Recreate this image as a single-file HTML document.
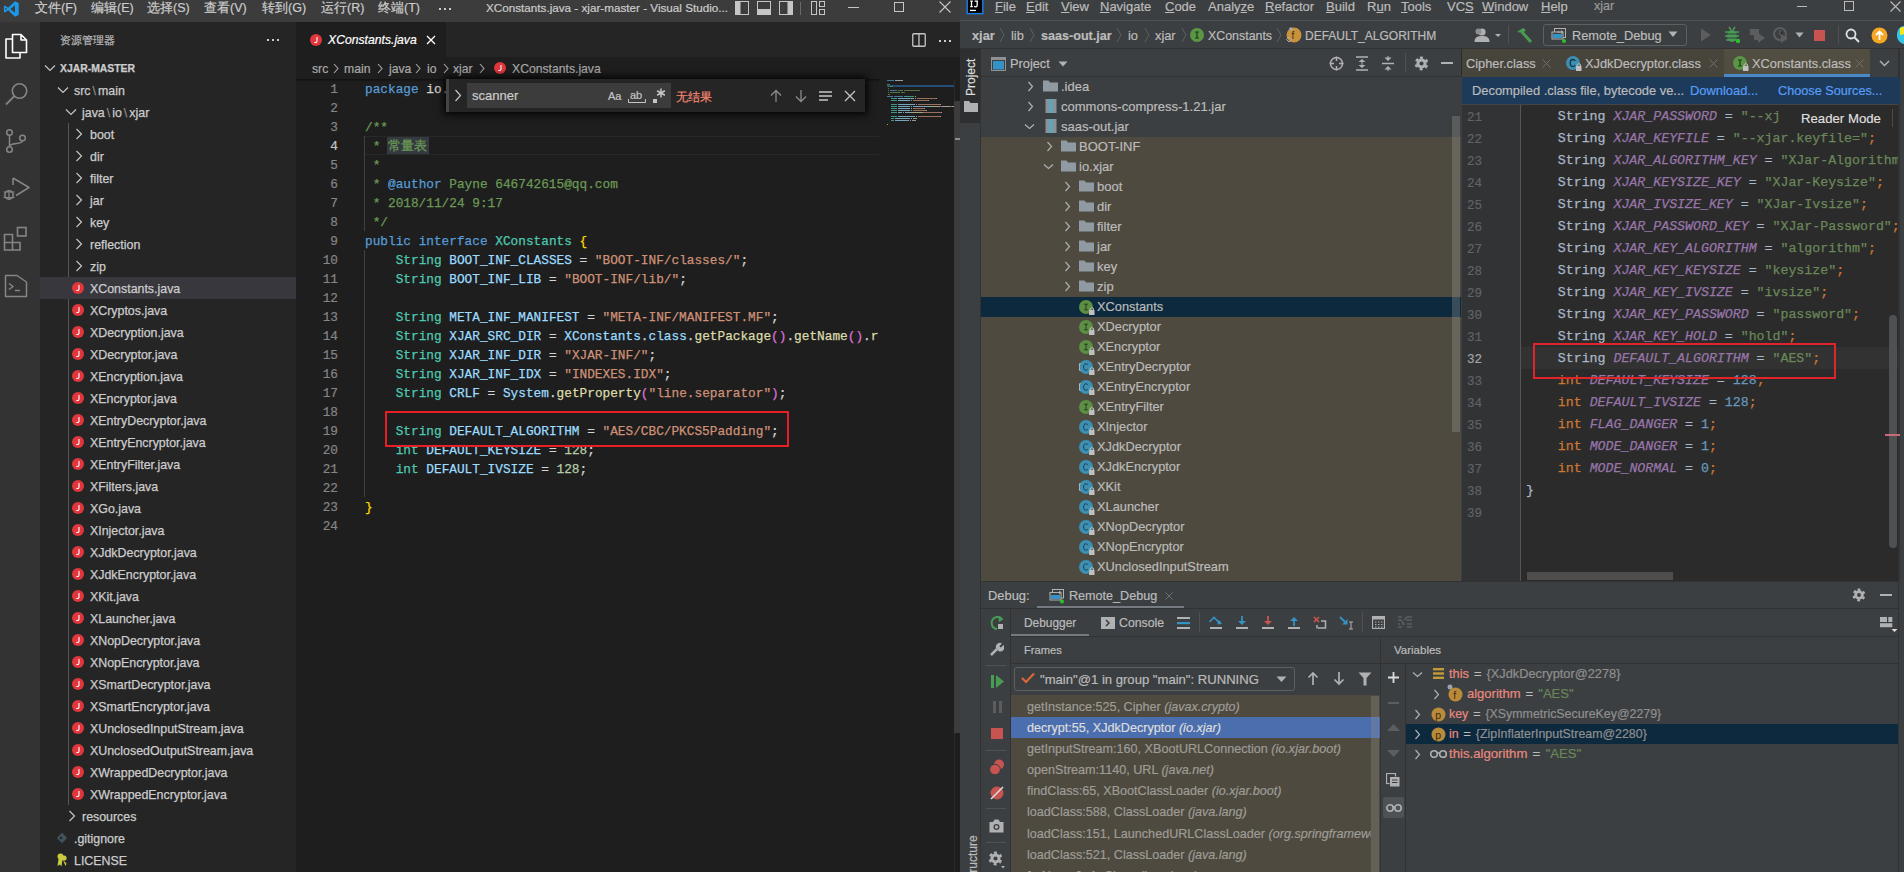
<!DOCTYPE html>
<html><head><meta charset="utf-8">
<style>
*{margin:0;padding:0;box-sizing:border-box}
html,body{width:1904px;height:872px;overflow:hidden;background:#2b2b2b;font-family:"Liberation Sans",sans-serif}
.a{position:absolute;white-space:pre}
#vs{position:absolute;left:0;top:0;width:960px;height:872px;background:#1e1e1e;overflow:hidden;color:#cccccc}
#ij{position:absolute;left:960px;top:0;width:944px;height:872px;background:#3c3f41;overflow:hidden;color:#bbbbbb}
.code{position:absolute;left:365px;top:80px;width:514px;font-family:"Liberation Mono",monospace;font-size:12.78px;line-height:19px;color:#d4d4d4;white-space:pre;overflow:hidden}
.code div{height:19px}
.ln{position:absolute;left:296px;top:80px;width:42px;text-align:right;font-family:"Liberation Mono",monospace;font-size:12.78px;line-height:19px;color:#858585;white-space:pre}
.ln div{height:19px}
.kw{color:#569cd6}.ty{color:#4ec9b0}.vr{color:#9cdcfe}.st{color:#ce9178}.nu{color:#b5cea8}.fn{color:#dcdcaa}.cm{color:#6a9955}.b1{color:#ffd700}.b2{color:#da70d6}.pn{color:#d4d4d4}
.tr{position:absolute;font-size:12.4px;color:#cccccc;height:22px;line-height:22px;white-space:pre}
.ijm{position:absolute;font-size:12.6px;color:#bbbbbb;white-space:pre}
.icode{position:absolute;font-family:"Liberation Mono",monospace;font-size:13.25px;line-height:22px;color:#a9b7c6;white-space:pre}
.icode div{height:22px}
.ik{color:#cc7832}.ip{color:#9876aa;font-style:italic}.is{color:#6a8759}.in{color:#6897bb}
u{text-decoration:underline;text-underline-offset:1px}
#vs,#ij{-webkit-text-stroke:0.2px currentColor}
.code,.icode,.tr{-webkit-text-stroke:0.25px currentColor}
</style></head><body>
<div id="vs">
<div class="a" style="left:0;top:0;width:960px;height:22px;background:#3c3c3c"></div>
<div class="a" style="left:0;top:22px;width:40px;height:850px;background:#333333"></div>
<div class="a" style="left:40px;top:22px;width:256px;height:850px;background:#252526"></div>
<div class="a" style="left:296px;top:22px;width:664px;height:35px;background:#252526"></div>
<div class="a" style="left:296px;top:22px;width:150px;height:35px;background:#1e1e1e"></div>
<div class="a" style="left:35px;top:0;height:16px;line-height:16px;font-size:12.5px;color:#cccccc">文件(F)</div>
<div class="a" style="left:91px;top:0;height:16px;line-height:16px;font-size:12.5px;color:#cccccc">编辑(E)</div>
<div class="a" style="left:147px;top:0;height:16px;line-height:16px;font-size:12.5px;color:#cccccc">选择(S)</div>
<div class="a" style="left:204px;top:0;height:16px;line-height:16px;font-size:12.5px;color:#cccccc">查看(V)</div>
<div class="a" style="left:262px;top:0;height:16px;line-height:16px;font-size:12.5px;color:#cccccc">转到(G)</div>
<div class="a" style="left:321px;top:0;height:16px;line-height:16px;font-size:12.5px;color:#cccccc">运行(R)</div>
<div class="a" style="left:378px;top:0;height:16px;line-height:16px;font-size:12.5px;color:#cccccc">终端(T)</div>
<div class="a" style="left:439px;top:8px;width:2px;height:2px;background:#cccccc;box-shadow:5px 0 #cccccc,10px 0 #cccccc"></div>
<div class="a" style="left:486px;top:0;line-height:16px;font-size:11.7px;color:#cccccc">XConstants.java - xjar-master - Visual Studio...</div>
<svg class="a" style="left:3px;top:1px" width="17" height="16" viewBox="0 0 16 16"><path d="M11.5 0.3 L15.2 2 V14 L11.5 15.7 L4.6 9.2 L1.7 11.4 L0.4 10.7 V5.3 L1.7 4.6 L4.6 6.8 Z M11.5 4.3 L6.9 8 L11.5 11.7 Z M1.9 6.4 V9.6 L3.5 8 Z" fill="#1c98e8"/></svg>
<svg class="a" style="left:734px;top:1px" width="95" height="14" viewBox="0 0 95 14"><rect x="1.5" y="0.5" width="13" height="13" fill="none" stroke="#c5c5c5"/><rect x="1.5" y="0.5" width="5" height="13" fill="#c5c5c5"/><rect x="23.5" y="0.5" width="13" height="13" fill="none" stroke="#c5c5c5"/><rect x="23.5" y="8" width="13" height="5.5" fill="#c5c5c5"/><rect x="45.5" y="0.5" width="13" height="13" fill="none" stroke="#c5c5c5"/><rect x="53.5" y="0.5" width="5" height="13" fill="#c5c5c5"/><line x1="66.5" y1="1" x2="66.5" y2="14" stroke="#6a6a6a"/><rect x="77.5" y="0.5" width="5" height="13" fill="none" stroke="#c5c5c5"/><rect x="85.5" y="0.5" width="5" height="5" fill="none" stroke="#c5c5c5"/><rect x="85.5" y="8.5" width="5" height="5" fill="none" stroke="#c5c5c5"/></svg>
<div class="a" style="left:848px;top:7px;width:11px;height:1px;background:#c5c5c5"></div>
<div class="a" style="left:894px;top:2px;width:10px;height:10px;border:1px solid #c5c5c5"></div>
<svg class="a" style="left:939px;top:1px" width="12" height="12" viewBox="0 0 12 12"><path d="M0.5 0.5 L11.5 11.5 M11.5 0.5 L0.5 11.5" stroke="#c5c5c5" stroke-width="1.1"/></svg>
<svg class="a" style="left:4px;top:33px" width="24" height="26" viewBox="0 0 24 26"><path d="M8.5 1.5 H17 L22.5 7 V19.5 H8.5 Z M17 1.5 V7 H22.5" fill="none" stroke="#ffffff" stroke-width="1.6" stroke-linejoin="round"/><path d="M8.5 6 H2 V25 H16 V19.5" fill="none" stroke="#ffffff" stroke-width="1.6" stroke-linejoin="round"/></svg>
<svg class="a" style="left:4px;top:81px" width="26" height="26" viewBox="0 0 26 26"><circle cx="15.5" cy="10" r="7.2" fill="none" stroke="#858585" stroke-width="1.6"/><path d="M10.3 15.2 L2 23.5" stroke="#858585" stroke-width="1.8"/></svg>
<svg class="a" style="left:4px;top:128px" width="24" height="26" viewBox="0 0 24 26"><circle cx="5.5" cy="4.5" r="2.8" fill="none" stroke="#858585" stroke-width="1.5"/><circle cx="5.5" cy="21.5" r="2.8" fill="none" stroke="#858585" stroke-width="1.5"/><circle cx="18.5" cy="10" r="2.8" fill="none" stroke="#858585" stroke-width="1.5"/><path d="M5.5 7.3 V18.7 M18.5 12.8 C18.5 17 5.5 14 5.5 18.7" fill="none" stroke="#858585" stroke-width="1.5"/></svg>
<svg class="a" style="left:2px;top:176px" width="28" height="26" viewBox="0 0 28 26"><path d="M11 2 L27 11.5 L14 19.5" fill="none" stroke="#858585" stroke-width="1.6" stroke-linejoin="round"/><path d="M11 2 V9" stroke="#858585" stroke-width="1.6"/><circle cx="7" cy="19" r="4.2" fill="none" stroke="#858585" stroke-width="1.6"/><path d="M1.5 16 H12.5 M1.5 21.5 H12.5 M7 14 V24" stroke="#858585" stroke-width="1.2"/></svg>
<svg class="a" style="left:3px;top:225px" width="26" height="26" viewBox="0 0 26 26"><path d="M1.5 9.5 H9.5 V17.5 H1.5 Z M1.5 17.5 V25 H9.5 V17.5 H17 V25 H9.5" fill="none" stroke="#858585" stroke-width="1.6"/><rect x="14.5" y="2.5" width="8.5" height="8.5" fill="none" stroke="#858585" stroke-width="1.6"/></svg>
<svg class="a" style="left:4px;top:274px" width="24" height="24" viewBox="0 0 24 24"><path d="M1.5 1.5 H13 L22.5 8 V22.5 H1.5 Z" fill="none" stroke="#858585" stroke-width="1.5" stroke-linejoin="round"/><path d="M5 9.5 L9 12.5 L5 15.5 M11 16.5 H16" fill="none" stroke="#858585" stroke-width="1.4"/></svg>
<div class="a" style="left:60px;top:32px;line-height:16px;font-size:10.5px;color:#bbbbbb">资源管理器</div>
<div class="a" style="left:267px;top:39px;width:2px;height:2px;background:#cccccc;box-shadow:5px 0 #cccccc,10px 0 #cccccc"></div>
<svg class="a" style="left:44px;top:64px" width="12" height="8" viewBox="0 0 12 8"><path d="M1 1.5 L6 6.5 L11 1.5" fill="none" stroke="#c5c5c5" stroke-width="1.2"/></svg>
<div class="tr" style="left:60px;top:58px;font-weight:bold;font-size:10.4px;color:#cccccc">XJAR-MASTER</div>
<svg class="a" style="left:57px;top:86px" width="12" height="8" viewBox="0 0 12 8"><path d="M1 1.5 L6 6.5 L11 1.5" fill="none" stroke="#c5c5c5" stroke-width="1.2"/></svg>
<div class="tr" style="left:74px;top:80px;">src<span style="color:#8b8b8b;margin:0 2px">\</span>main</div>
<svg class="a" style="left:65px;top:108px" width="12" height="8" viewBox="0 0 12 8"><path d="M1 1.5 L6 6.5 L11 1.5" fill="none" stroke="#c5c5c5" stroke-width="1.2"/></svg>
<div class="tr" style="left:82px;top:102px;">java<span style="color:#8b8b8b;margin:0 2px">\</span>io<span style="color:#8b8b8b;margin:0 2px">\</span>xjar</div>
<div class="a" style="left:68px;top:123px;width:1px;height:682px;background:#585858"></div>
<svg class="a" style="left:75px;top:128px" width="8" height="12" viewBox="0 0 8 12"><path d="M1.5 1 L6.5 6 L1.5 11" fill="none" stroke="#c5c5c5" stroke-width="1.2"/></svg>
<div class="tr" style="left:90px;top:124px;">boot</div>
<svg class="a" style="left:75px;top:150px" width="8" height="12" viewBox="0 0 8 12"><path d="M1.5 1 L6.5 6 L1.5 11" fill="none" stroke="#c5c5c5" stroke-width="1.2"/></svg>
<div class="tr" style="left:90px;top:146px;">dir</div>
<svg class="a" style="left:75px;top:172px" width="8" height="12" viewBox="0 0 8 12"><path d="M1.5 1 L6.5 6 L1.5 11" fill="none" stroke="#c5c5c5" stroke-width="1.2"/></svg>
<div class="tr" style="left:90px;top:168px;">filter</div>
<svg class="a" style="left:75px;top:194px" width="8" height="12" viewBox="0 0 8 12"><path d="M1.5 1 L6.5 6 L1.5 11" fill="none" stroke="#c5c5c5" stroke-width="1.2"/></svg>
<div class="tr" style="left:90px;top:190px;">jar</div>
<svg class="a" style="left:75px;top:216px" width="8" height="12" viewBox="0 0 8 12"><path d="M1.5 1 L6.5 6 L1.5 11" fill="none" stroke="#c5c5c5" stroke-width="1.2"/></svg>
<div class="tr" style="left:90px;top:212px;">key</div>
<svg class="a" style="left:75px;top:238px" width="8" height="12" viewBox="0 0 8 12"><path d="M1.5 1 L6.5 6 L1.5 11" fill="none" stroke="#c5c5c5" stroke-width="1.2"/></svg>
<div class="tr" style="left:90px;top:234px;">reflection</div>
<svg class="a" style="left:75px;top:260px" width="8" height="12" viewBox="0 0 8 12"><path d="M1.5 1 L6.5 6 L1.5 11" fill="none" stroke="#c5c5c5" stroke-width="1.2"/></svg>
<div class="tr" style="left:90px;top:256px;">zip</div>
<div class="a" style="left:40px;top:277px;width:256px;height:22px;background:#37373d"></div>
<svg class="a" style="left:72px;top:282px" width="12" height="12" viewBox="0 0 12 12"><circle cx="6" cy="6" r="6" fill="#e1373c"/><path d="M7 3 V7 C7 8.6 5.4 8.8 4.3 8.2" fill="none" stroke="#fff" stroke-width="1.1"/></svg>
<div class="tr" style="left:90px;top:278px;">XConstants.java</div>
<svg class="a" style="left:72px;top:304px" width="12" height="12" viewBox="0 0 12 12"><circle cx="6" cy="6" r="6" fill="#e1373c"/><path d="M7 3 V7 C7 8.6 5.4 8.8 4.3 8.2" fill="none" stroke="#fff" stroke-width="1.1"/></svg>
<div class="tr" style="left:90px;top:300px;">XCryptos.java</div>
<svg class="a" style="left:72px;top:326px" width="12" height="12" viewBox="0 0 12 12"><circle cx="6" cy="6" r="6" fill="#e1373c"/><path d="M7 3 V7 C7 8.6 5.4 8.8 4.3 8.2" fill="none" stroke="#fff" stroke-width="1.1"/></svg>
<div class="tr" style="left:90px;top:322px;">XDecryption.java</div>
<svg class="a" style="left:72px;top:348px" width="12" height="12" viewBox="0 0 12 12"><circle cx="6" cy="6" r="6" fill="#e1373c"/><path d="M7 3 V7 C7 8.6 5.4 8.8 4.3 8.2" fill="none" stroke="#fff" stroke-width="1.1"/></svg>
<div class="tr" style="left:90px;top:344px;">XDecryptor.java</div>
<svg class="a" style="left:72px;top:370px" width="12" height="12" viewBox="0 0 12 12"><circle cx="6" cy="6" r="6" fill="#e1373c"/><path d="M7 3 V7 C7 8.6 5.4 8.8 4.3 8.2" fill="none" stroke="#fff" stroke-width="1.1"/></svg>
<div class="tr" style="left:90px;top:366px;">XEncryption.java</div>
<svg class="a" style="left:72px;top:392px" width="12" height="12" viewBox="0 0 12 12"><circle cx="6" cy="6" r="6" fill="#e1373c"/><path d="M7 3 V7 C7 8.6 5.4 8.8 4.3 8.2" fill="none" stroke="#fff" stroke-width="1.1"/></svg>
<div class="tr" style="left:90px;top:388px;">XEncryptor.java</div>
<svg class="a" style="left:72px;top:414px" width="12" height="12" viewBox="0 0 12 12"><circle cx="6" cy="6" r="6" fill="#e1373c"/><path d="M7 3 V7 C7 8.6 5.4 8.8 4.3 8.2" fill="none" stroke="#fff" stroke-width="1.1"/></svg>
<div class="tr" style="left:90px;top:410px;">XEntryDecryptor.java</div>
<svg class="a" style="left:72px;top:436px" width="12" height="12" viewBox="0 0 12 12"><circle cx="6" cy="6" r="6" fill="#e1373c"/><path d="M7 3 V7 C7 8.6 5.4 8.8 4.3 8.2" fill="none" stroke="#fff" stroke-width="1.1"/></svg>
<div class="tr" style="left:90px;top:432px;">XEntryEncryptor.java</div>
<svg class="a" style="left:72px;top:458px" width="12" height="12" viewBox="0 0 12 12"><circle cx="6" cy="6" r="6" fill="#e1373c"/><path d="M7 3 V7 C7 8.6 5.4 8.8 4.3 8.2" fill="none" stroke="#fff" stroke-width="1.1"/></svg>
<div class="tr" style="left:90px;top:454px;">XEntryFilter.java</div>
<svg class="a" style="left:72px;top:480px" width="12" height="12" viewBox="0 0 12 12"><circle cx="6" cy="6" r="6" fill="#e1373c"/><path d="M7 3 V7 C7 8.6 5.4 8.8 4.3 8.2" fill="none" stroke="#fff" stroke-width="1.1"/></svg>
<div class="tr" style="left:90px;top:476px;">XFilters.java</div>
<svg class="a" style="left:72px;top:502px" width="12" height="12" viewBox="0 0 12 12"><circle cx="6" cy="6" r="6" fill="#e1373c"/><path d="M7 3 V7 C7 8.6 5.4 8.8 4.3 8.2" fill="none" stroke="#fff" stroke-width="1.1"/></svg>
<div class="tr" style="left:90px;top:498px;">XGo.java</div>
<svg class="a" style="left:72px;top:524px" width="12" height="12" viewBox="0 0 12 12"><circle cx="6" cy="6" r="6" fill="#e1373c"/><path d="M7 3 V7 C7 8.6 5.4 8.8 4.3 8.2" fill="none" stroke="#fff" stroke-width="1.1"/></svg>
<div class="tr" style="left:90px;top:520px;">XInjector.java</div>
<svg class="a" style="left:72px;top:546px" width="12" height="12" viewBox="0 0 12 12"><circle cx="6" cy="6" r="6" fill="#e1373c"/><path d="M7 3 V7 C7 8.6 5.4 8.8 4.3 8.2" fill="none" stroke="#fff" stroke-width="1.1"/></svg>
<div class="tr" style="left:90px;top:542px;">XJdkDecryptor.java</div>
<svg class="a" style="left:72px;top:568px" width="12" height="12" viewBox="0 0 12 12"><circle cx="6" cy="6" r="6" fill="#e1373c"/><path d="M7 3 V7 C7 8.6 5.4 8.8 4.3 8.2" fill="none" stroke="#fff" stroke-width="1.1"/></svg>
<div class="tr" style="left:90px;top:564px;">XJdkEncryptor.java</div>
<svg class="a" style="left:72px;top:590px" width="12" height="12" viewBox="0 0 12 12"><circle cx="6" cy="6" r="6" fill="#e1373c"/><path d="M7 3 V7 C7 8.6 5.4 8.8 4.3 8.2" fill="none" stroke="#fff" stroke-width="1.1"/></svg>
<div class="tr" style="left:90px;top:586px;">XKit.java</div>
<svg class="a" style="left:72px;top:612px" width="12" height="12" viewBox="0 0 12 12"><circle cx="6" cy="6" r="6" fill="#e1373c"/><path d="M7 3 V7 C7 8.6 5.4 8.8 4.3 8.2" fill="none" stroke="#fff" stroke-width="1.1"/></svg>
<div class="tr" style="left:90px;top:608px;">XLauncher.java</div>
<svg class="a" style="left:72px;top:634px" width="12" height="12" viewBox="0 0 12 12"><circle cx="6" cy="6" r="6" fill="#e1373c"/><path d="M7 3 V7 C7 8.6 5.4 8.8 4.3 8.2" fill="none" stroke="#fff" stroke-width="1.1"/></svg>
<div class="tr" style="left:90px;top:630px;">XNopDecryptor.java</div>
<svg class="a" style="left:72px;top:656px" width="12" height="12" viewBox="0 0 12 12"><circle cx="6" cy="6" r="6" fill="#e1373c"/><path d="M7 3 V7 C7 8.6 5.4 8.8 4.3 8.2" fill="none" stroke="#fff" stroke-width="1.1"/></svg>
<div class="tr" style="left:90px;top:652px;">XNopEncryptor.java</div>
<svg class="a" style="left:72px;top:678px" width="12" height="12" viewBox="0 0 12 12"><circle cx="6" cy="6" r="6" fill="#e1373c"/><path d="M7 3 V7 C7 8.6 5.4 8.8 4.3 8.2" fill="none" stroke="#fff" stroke-width="1.1"/></svg>
<div class="tr" style="left:90px;top:674px;">XSmartDecryptor.java</div>
<svg class="a" style="left:72px;top:700px" width="12" height="12" viewBox="0 0 12 12"><circle cx="6" cy="6" r="6" fill="#e1373c"/><path d="M7 3 V7 C7 8.6 5.4 8.8 4.3 8.2" fill="none" stroke="#fff" stroke-width="1.1"/></svg>
<div class="tr" style="left:90px;top:696px;">XSmartEncryptor.java</div>
<svg class="a" style="left:72px;top:722px" width="12" height="12" viewBox="0 0 12 12"><circle cx="6" cy="6" r="6" fill="#e1373c"/><path d="M7 3 V7 C7 8.6 5.4 8.8 4.3 8.2" fill="none" stroke="#fff" stroke-width="1.1"/></svg>
<div class="tr" style="left:90px;top:718px;">XUnclosedInputStream.java</div>
<svg class="a" style="left:72px;top:744px" width="12" height="12" viewBox="0 0 12 12"><circle cx="6" cy="6" r="6" fill="#e1373c"/><path d="M7 3 V7 C7 8.6 5.4 8.8 4.3 8.2" fill="none" stroke="#fff" stroke-width="1.1"/></svg>
<div class="tr" style="left:90px;top:740px;">XUnclosedOutputStream.java</div>
<svg class="a" style="left:72px;top:766px" width="12" height="12" viewBox="0 0 12 12"><circle cx="6" cy="6" r="6" fill="#e1373c"/><path d="M7 3 V7 C7 8.6 5.4 8.8 4.3 8.2" fill="none" stroke="#fff" stroke-width="1.1"/></svg>
<div class="tr" style="left:90px;top:762px;">XWrappedDecryptor.java</div>
<svg class="a" style="left:72px;top:788px" width="12" height="12" viewBox="0 0 12 12"><circle cx="6" cy="6" r="6" fill="#e1373c"/><path d="M7 3 V7 C7 8.6 5.4 8.8 4.3 8.2" fill="none" stroke="#fff" stroke-width="1.1"/></svg>
<div class="tr" style="left:90px;top:784px;">XWrappedEncryptor.java</div>
<svg class="a" style="left:68px;top:810px" width="8" height="12" viewBox="0 0 8 12"><path d="M1.5 1 L6.5 6 L1.5 11" fill="none" stroke="#c5c5c5" stroke-width="1.2"/></svg>
<div class="tr" style="left:82px;top:806px;">resources</div>
<svg class="a" style="left:56px;top:832px" width="12" height="12" viewBox="0 0 12 12"><path d="M6 0.8 L11.2 6 L6 11.2 L0.8 6 Z" fill="#41535b"/><circle cx="5" cy="6" r="1.3" fill="#252526"/></svg>
<div class="tr" style="left:74px;top:828px;">.gitignore</div>
<svg class="a" style="left:57px;top:853px" width="10" height="14" viewBox="0 0 10 14"><circle cx="3.5" cy="3.5" r="3" fill="#cbcb41"/><circle cx="7" cy="5" r="2.6" fill="#cbcb41"/><path d="M1.5 6 L0.5 13 L3 11.5 L4.5 13.5 L5.5 6 Z M6 7 L8.5 13 L9.5 10.5" fill="#cbcb41"/></svg>
<div class="tr" style="left:74px;top:850px;">LICENSE</div>
<svg class="a" style="left:310px;top:34px" width="12" height="12" viewBox="0 0 12 12"><circle cx="6" cy="6" r="6" fill="#e1373c"/><path d="M7 3 V7 C7 8.6 5.4 8.8 4.3 8.2" fill="none" stroke="#fff" stroke-width="1.1"/></svg>
<div class="a" style="left:328px;top:32px;line-height:16px;font-size:12.2px;font-style:italic;color:#ffffff">XConstants.java</div>
<svg class="a" style="left:426px;top:35px" width="10" height="10" viewBox="0 0 10 10"><path d="M1 1 L9 9 M9 1 L1 9" stroke="#ffffff" stroke-width="1.3"/></svg>
<svg class="a" style="left:912px;top:33px" width="14" height="14" viewBox="0 0 14 14"><rect x="0.75" y="0.75" width="12.5" height="12.5" rx="1" fill="none" stroke="#c5c5c5" stroke-width="1.3"/><line x1="7" y1="1" x2="7" y2="13" stroke="#c5c5c5" stroke-width="1.3"/></svg>
<div class="a" style="left:939px;top:40px;width:2px;height:2px;background:#cccccc;box-shadow:5px 0 #cccccc,10px 0 #cccccc"></div>
<div class="a" style="left:312px;top:61px;line-height:16px;font-size:12.2px;color:#a9a9a9">src</div>
<div class="a" style="left:344px;top:61px;line-height:16px;font-size:12.2px;color:#a9a9a9">main</div>
<div class="a" style="left:389px;top:61px;line-height:16px;font-size:12.2px;color:#a9a9a9">java</div>
<div class="a" style="left:427px;top:61px;line-height:16px;font-size:12.2px;color:#a9a9a9">io</div>
<div class="a" style="left:453px;top:61px;line-height:16px;font-size:12.2px;color:#a9a9a9">xjar</div>
<svg class="a" style="left:333px;top:63px" width="6" height="11" viewBox="0 0 6 11"><path d="M1 1 L5 5.5 L1 10" fill="none" stroke="#a9a9a9" stroke-width="1.1"/></svg>
<svg class="a" style="left:377px;top:63px" width="6" height="11" viewBox="0 0 6 11"><path d="M1 1 L5 5.5 L1 10" fill="none" stroke="#a9a9a9" stroke-width="1.1"/></svg>
<svg class="a" style="left:415px;top:63px" width="6" height="11" viewBox="0 0 6 11"><path d="M1 1 L5 5.5 L1 10" fill="none" stroke="#a9a9a9" stroke-width="1.1"/></svg>
<svg class="a" style="left:443px;top:63px" width="6" height="11" viewBox="0 0 6 11"><path d="M1 1 L5 5.5 L1 10" fill="none" stroke="#a9a9a9" stroke-width="1.1"/></svg>
<svg class="a" style="left:479px;top:63px" width="6" height="11" viewBox="0 0 6 11"><path d="M1 1 L5 5.5 L1 10" fill="none" stroke="#a9a9a9" stroke-width="1.1"/></svg>
<svg class="a" style="left:494px;top:62px" width="12" height="12" viewBox="0 0 12 12"><circle cx="6" cy="6" r="6" fill="#e1373c"/><path d="M7 3 V7 C7 8.6 5.4 8.8 4.3 8.2" fill="none" stroke="#fff" stroke-width="1.1"/></svg>
<div class="a" style="left:512px;top:61px;line-height:16px;font-size:12.2px;color:#a9a9a9">XConstants.java</div>
<div class="a" style="left:296px;top:79px;width:583px;height:3px;background:linear-gradient(#111111,rgba(30,30,30,0))"></div>
<div class="a" style="left:365px;top:136px;width:514px;height:19px;border-top:1px solid #282828;border-bottom:1px solid #282828"></div>
<div class="a" style="left:387px;top:137px;width:42px;height:17px;background:#343a40"></div>
<div class="a" style="left:364px;top:136px;width:1px;height:95px;background:#404040"></div>
<div class="a" style="left:364px;top:250px;width:1px;height:247px;background:#404040"></div>
<div class="ln"><div style="">1</div><div style="">2</div><div style="">3</div><div style="color:#c6c6c6">4</div><div style="">5</div><div style="">6</div><div style="">7</div><div style="">8</div><div style="">9</div><div style="">10</div><div style="">11</div><div style="">12</div><div style="">13</div><div style="">14</div><div style="">15</div><div style="">16</div><div style="">17</div><div style="">18</div><div style="">19</div><div style="">20</div><div style="">21</div><div style="">22</div><div style="">23</div><div style="">24</div></div>
<div class="code"><div><span class="kw">package</span> io.xjar;</div><div></div><div><span class="cm">/**</span></div><div><span class="cm"> * 常量表</span></div><div><span class="cm"> *</span></div><div><span class="cm"> * </span><span class="kw">@author</span><span class="cm"> Payne 646742615@qq.com</span></div><div><span class="cm"> * 2018/11/24 9:17</span></div><div><span class="cm"> */</span></div><div><span class="kw">public</span> <span class="kw">interface</span> <span class="ty">XConstants</span> <span class="b1">{</span></div><div>    <span class="ty">String</span> <span class="vr">BOOT_INF_CLASSES</span> = <span class="st">&quot;BOOT-INF/classes/&quot;</span>;</div><div>    <span class="ty">String</span> <span class="vr">BOOT_INF_LIB</span> = <span class="st">&quot;BOOT-INF/lib/&quot;</span>;</div><div></div><div>    <span class="ty">String</span> <span class="vr">META_INF_MANIFEST</span> = <span class="st">&quot;META-INF/MANIFEST.MF&quot;</span>;</div><div>    <span class="ty">String</span> <span class="vr">XJAR_SRC_DIR</span> = <span class="vr">XConstants</span>.<span class="vr">class</span>.<span class="fn">getPackage</span><span class="b2">()</span>.<span class="fn">getName</span><span class="b2">()</span>.<span class="fn">replace</span><span class="b2">(</span><span class="st">&#x27;.&#x27;</span>, <span class="st">&#x27;/&#x27;</span><span class="b2">)</span> + <span class="st">&quot;/&quot;</span>;</div><div>    <span class="ty">String</span> <span class="vr">XJAR_INF_DIR</span> = <span class="st">&quot;XJAR-INF/&quot;</span>;</div><div>    <span class="ty">String</span> <span class="vr">XJAR_INF_IDX</span> = <span class="st">&quot;INDEXES.IDX&quot;</span>;</div><div>    <span class="ty">String</span> <span class="vr">CRLF</span> = <span class="vr">System</span>.<span class="fn">getProperty</span><span class="b2">(</span><span class="st">&quot;line.separator&quot;</span><span class="b2">)</span>;</div><div></div><div>    <span class="ty">String</span> <span class="vr">DEFAULT_ALGORITHM</span> = <span class="st">&quot;AES/CBC/PKCS5Padding&quot;</span>;</div><div>    <span class="ty">int</span> <span class="vr">DEFAULT_KEYSIZE</span> = <span class="nu">128</span>;</div><div>    <span class="ty">int</span> <span class="vr">DEFAULT_IVSIZE</span> = <span class="nu">128</span>;</div><div></div><div><span class="b1">}</span></div><div></div></div>
<div class="a" style="left:385px;top:411px;width:404px;height:36px;border:2px solid #e81f25"></div>
<div class="a" style="left:879px;top:79px;width:81px;height:793px;background:#1e1e1e"></div>
<div class="a" style="left:887px;top:85px;width:67px;height:2px;background:#264f78"></div>
<div class="a" style="left:954px;top:79px;width:6px;height:793px;background:#1e1e1e;border-left:1px solid #2a2a2a"></div>
<div class="a" style="left:954px;top:101px;width:6px;height:632px;background:#3c3c3c"></div>
<div class="a" style="left:955px;top:138px;width:5px;height:2px;background:#8a8a8a"></div>
<div class="a" style="left:887px;top:80px;width:67px;height:60px;overflow:hidden"><div class="a" style="left:0px;top:0px;width:7px;height:1px;background:#569cd6;opacity:0.7"></div><div class="a" style="left:8px;top:0px;width:8px;height:1px;background:#d4d4d4;opacity:0.7"></div><div class="a" style="left:0px;top:4px;width:3px;height:1px;background:#6a9955;opacity:0.7"></div><div class="a" style="left:1px;top:6px;width:1px;height:1px;background:#6a9955;opacity:0.7"></div><div class="a" style="left:3px;top:6px;width:3px;height:1px;background:#6a9955;opacity:0.7"></div><div class="a" style="left:1px;top:8px;width:1px;height:1px;background:#6a9955;opacity:0.7"></div><div class="a" style="left:1px;top:10px;width:1px;height:1px;background:#6a9955;opacity:0.7"></div><div class="a" style="left:3px;top:10px;width:7px;height:1px;background:#569cd6;opacity:0.7"></div><div class="a" style="left:11px;top:10px;width:5px;height:1px;background:#6a9955;opacity:0.7"></div><div class="a" style="left:17px;top:10px;width:16px;height:1px;background:#6a9955;opacity:0.7"></div><div class="a" style="left:1px;top:12px;width:1px;height:1px;background:#6a9955;opacity:0.7"></div><div class="a" style="left:3px;top:12px;width:10px;height:1px;background:#6a9955;opacity:0.7"></div><div class="a" style="left:14px;top:12px;width:4px;height:1px;background:#6a9955;opacity:0.7"></div><div class="a" style="left:1px;top:14px;width:2px;height:1px;background:#6a9955;opacity:0.7"></div><div class="a" style="left:0px;top:16px;width:6px;height:1px;background:#569cd6;opacity:0.7"></div><div class="a" style="left:7px;top:16px;width:9px;height:1px;background:#569cd6;opacity:0.7"></div><div class="a" style="left:17px;top:16px;width:10px;height:1px;background:#4ec9b0;opacity:0.7"></div><div class="a" style="left:28px;top:16px;width:1px;height:1px;background:#ffd700;opacity:0.7"></div><div class="a" style="left:4px;top:18px;width:6px;height:1px;background:#4ec9b0;opacity:0.7"></div><div class="a" style="left:11px;top:18px;width:16px;height:1px;background:#9cdcfe;opacity:0.7"></div><div class="a" style="left:28px;top:18px;width:1px;height:1px;background:#d4d4d4;opacity:0.7"></div><div class="a" style="left:30px;top:18px;width:19px;height:1px;background:#ce9178;opacity:0.7"></div><div class="a" style="left:49px;top:18px;width:1px;height:1px;background:#d4d4d4;opacity:0.7"></div><div class="a" style="left:4px;top:20px;width:6px;height:1px;background:#4ec9b0;opacity:0.7"></div><div class="a" style="left:11px;top:20px;width:12px;height:1px;background:#9cdcfe;opacity:0.7"></div><div class="a" style="left:24px;top:20px;width:1px;height:1px;background:#d4d4d4;opacity:0.7"></div><div class="a" style="left:26px;top:20px;width:15px;height:1px;background:#ce9178;opacity:0.7"></div><div class="a" style="left:41px;top:20px;width:1px;height:1px;background:#d4d4d4;opacity:0.7"></div><div class="a" style="left:4px;top:24px;width:6px;height:1px;background:#4ec9b0;opacity:0.7"></div><div class="a" style="left:11px;top:24px;width:17px;height:1px;background:#9cdcfe;opacity:0.7"></div><div class="a" style="left:29px;top:24px;width:1px;height:1px;background:#d4d4d4;opacity:0.7"></div><div class="a" style="left:31px;top:24px;width:22px;height:1px;background:#ce9178;opacity:0.7"></div><div class="a" style="left:53px;top:24px;width:1px;height:1px;background:#d4d4d4;opacity:0.7"></div><div class="a" style="left:4px;top:26px;width:6px;height:1px;background:#4ec9b0;opacity:0.7"></div><div class="a" style="left:11px;top:26px;width:12px;height:1px;background:#9cdcfe;opacity:0.7"></div><div class="a" style="left:24px;top:26px;width:1px;height:1px;background:#d4d4d4;opacity:0.7"></div><div class="a" style="left:26px;top:26px;width:10px;height:1px;background:#9cdcfe;opacity:0.7"></div><div class="a" style="left:36px;top:26px;width:1px;height:1px;background:#d4d4d4;opacity:0.7"></div><div class="a" style="left:37px;top:26px;width:5px;height:1px;background:#9cdcfe;opacity:0.7"></div><div class="a" style="left:42px;top:26px;width:1px;height:1px;background:#d4d4d4;opacity:0.7"></div><div class="a" style="left:43px;top:26px;width:10px;height:1px;background:#dcdcaa;opacity:0.7"></div><div class="a" style="left:53px;top:26px;width:2px;height:1px;background:#da70d6;opacity:0.7"></div><div class="a" style="left:55px;top:26px;width:1px;height:1px;background:#d4d4d4;opacity:0.7"></div><div class="a" style="left:56px;top:26px;width:7px;height:1px;background:#dcdcaa;opacity:0.7"></div><div class="a" style="left:63px;top:26px;width:2px;height:1px;background:#da70d6;opacity:0.7"></div><div class="a" style="left:65px;top:26px;width:1px;height:1px;background:#d4d4d4;opacity:0.7"></div><div class="a" style="left:66px;top:26px;width:7px;height:1px;background:#dcdcaa;opacity:0.7"></div><div class="a" style="left:73px;top:26px;width:1px;height:1px;background:#da70d6;opacity:0.7"></div><div class="a" style="left:74px;top:26px;width:3px;height:1px;background:#ce9178;opacity:0.7"></div><div class="a" style="left:77px;top:26px;width:1px;height:1px;background:#d4d4d4;opacity:0.7"></div><div class="a" style="left:79px;top:26px;width:3px;height:1px;background:#ce9178;opacity:0.7"></div><div class="a" style="left:82px;top:26px;width:1px;height:1px;background:#da70d6;opacity:0.7"></div><div class="a" style="left:84px;top:26px;width:1px;height:1px;background:#d4d4d4;opacity:0.7"></div><div class="a" style="left:86px;top:26px;width:3px;height:1px;background:#ce9178;opacity:0.7"></div><div class="a" style="left:89px;top:26px;width:1px;height:1px;background:#d4d4d4;opacity:0.7"></div><div class="a" style="left:4px;top:28px;width:6px;height:1px;background:#4ec9b0;opacity:0.7"></div><div class="a" style="left:11px;top:28px;width:12px;height:1px;background:#9cdcfe;opacity:0.7"></div><div class="a" style="left:24px;top:28px;width:1px;height:1px;background:#d4d4d4;opacity:0.7"></div><div class="a" style="left:26px;top:28px;width:11px;height:1px;background:#ce9178;opacity:0.7"></div><div class="a" style="left:37px;top:28px;width:1px;height:1px;background:#d4d4d4;opacity:0.7"></div><div class="a" style="left:4px;top:30px;width:6px;height:1px;background:#4ec9b0;opacity:0.7"></div><div class="a" style="left:11px;top:30px;width:12px;height:1px;background:#9cdcfe;opacity:0.7"></div><div class="a" style="left:24px;top:30px;width:1px;height:1px;background:#d4d4d4;opacity:0.7"></div><div class="a" style="left:26px;top:30px;width:13px;height:1px;background:#ce9178;opacity:0.7"></div><div class="a" style="left:39px;top:30px;width:1px;height:1px;background:#d4d4d4;opacity:0.7"></div><div class="a" style="left:4px;top:32px;width:6px;height:1px;background:#4ec9b0;opacity:0.7"></div><div class="a" style="left:11px;top:32px;width:4px;height:1px;background:#9cdcfe;opacity:0.7"></div><div class="a" style="left:16px;top:32px;width:1px;height:1px;background:#d4d4d4;opacity:0.7"></div><div class="a" style="left:18px;top:32px;width:6px;height:1px;background:#9cdcfe;opacity:0.7"></div><div class="a" style="left:24px;top:32px;width:1px;height:1px;background:#d4d4d4;opacity:0.7"></div><div class="a" style="left:25px;top:32px;width:11px;height:1px;background:#dcdcaa;opacity:0.7"></div><div class="a" style="left:36px;top:32px;width:1px;height:1px;background:#da70d6;opacity:0.7"></div><div class="a" style="left:37px;top:32px;width:16px;height:1px;background:#ce9178;opacity:0.7"></div><div class="a" style="left:53px;top:32px;width:1px;height:1px;background:#da70d6;opacity:0.7"></div><div class="a" style="left:54px;top:32px;width:1px;height:1px;background:#d4d4d4;opacity:0.7"></div><div class="a" style="left:4px;top:36px;width:6px;height:1px;background:#4ec9b0;opacity:0.7"></div><div class="a" style="left:11px;top:36px;width:17px;height:1px;background:#9cdcfe;opacity:0.7"></div><div class="a" style="left:29px;top:36px;width:1px;height:1px;background:#d4d4d4;opacity:0.7"></div><div class="a" style="left:31px;top:36px;width:22px;height:1px;background:#ce9178;opacity:0.7"></div><div class="a" style="left:53px;top:36px;width:1px;height:1px;background:#d4d4d4;opacity:0.7"></div><div class="a" style="left:4px;top:38px;width:3px;height:1px;background:#4ec9b0;opacity:0.7"></div><div class="a" style="left:8px;top:38px;width:15px;height:1px;background:#9cdcfe;opacity:0.7"></div><div class="a" style="left:24px;top:38px;width:1px;height:1px;background:#d4d4d4;opacity:0.7"></div><div class="a" style="left:26px;top:38px;width:3px;height:1px;background:#b5cea8;opacity:0.7"></div><div class="a" style="left:29px;top:38px;width:1px;height:1px;background:#d4d4d4;opacity:0.7"></div><div class="a" style="left:4px;top:40px;width:3px;height:1px;background:#4ec9b0;opacity:0.7"></div><div class="a" style="left:8px;top:40px;width:14px;height:1px;background:#9cdcfe;opacity:0.7"></div><div class="a" style="left:23px;top:40px;width:1px;height:1px;background:#d4d4d4;opacity:0.7"></div><div class="a" style="left:25px;top:40px;width:3px;height:1px;background:#b5cea8;opacity:0.7"></div><div class="a" style="left:28px;top:40px;width:1px;height:1px;background:#d4d4d4;opacity:0.7"></div><div class="a" style="left:0px;top:44px;width:1px;height:1px;background:#ffd700;opacity:0.7"></div></div>
<div class="a" style="left:446px;top:79px;width:419px;height:33px;background:#252526;box-shadow:0 0 8px 2px #000000"></div>
<div class="a" style="left:446px;top:79px;width:3px;height:33px;background:#454545"></div>
<svg class="a" style="left:454px;top:89px" width="8" height="13" viewBox="0 0 8 13"><path d="M1.5 1 L6.5 6.5 L1.5 12" fill="none" stroke="#c5c5c5" stroke-width="1.2"/></svg>
<div class="a" style="left:467px;top:83px;width:204px;height:25px;background:#3c3c3c"></div>
<div class="a" style="left:472px;top:88px;line-height:16px;font-size:13px;color:#cccccc">scanner</div>
<div class="a" style="left:608px;top:89px;line-height:14px;font-size:11px;color:#c5c5c5">Aa</div>
<div class="a" style="left:630px;top:88px;line-height:14px;font-size:11px;color:#c5c5c5">ab</div>
<svg class="a" style="left:628px;top:99px" width="18" height="4" viewBox="0 0 18 4"><path d="M0.5 0 V3.5 H17.5 V0" fill="none" stroke="#c5c5c5" stroke-width="1"/></svg>
<div class="a" style="left:653px;top:99px;width:4px;height:4px;background:#c5c5c5"></div>
<svg class="a" style="left:656px;top:88px" width="10" height="10" viewBox="0 0 10 10"><path d="M5 0.5 V9.5 M1.1 2.75 L8.9 7.25 M8.9 2.75 L1.1 7.25" stroke="#c5c5c5" stroke-width="1.5"/></svg>
<div class="a" style="left:676px;top:89px;line-height:16px;font-size:12px;color:#f48771">无结果</div>
<svg class="a" style="left:769px;top:89px" width="95" height="14" viewBox="0 0 95 14"><path d="M7 13 V1.5 M2 6.5 L7 1.5 L12 6.5" fill="none" stroke="#8b8b8b" stroke-width="1.3"/><path d="M32 1 V12.5 M27 7.5 L32 12.5 L37 7.5" fill="none" stroke="#8b8b8b" stroke-width="1.3"/><path d="M50 3 H63 M50 7 H63 M50 11 H59" fill="none" stroke="#c5c5c5" stroke-width="1.3"/><path d="M76 2 L86 12 M86 2 L76 12" fill="none" stroke="#c5c5c5" stroke-width="1.3"/></svg>
</div>
<div id="ij">
<div class="a" style="left:0px;top:0px;width:944px;height:872px;background:#3c3f41;"></div>
<div class="a" style="left:0px;top:20px;width:944px;height:1px;background:#515151;"></div>
<div class="a" style="left:0px;top:48px;width:944px;height:1px;background:#323232;"></div>
<div class="a" style="left:0px;top:49px;width:21px;height:823px;background:#3c3f41;"></div>
<div class="a" style="left:20px;top:49px;width:1px;height:823px;background:#323232;"></div>
<div class="a" style="left:0px;top:49px;width:20px;height:74px;background:#2d2f30;"></div>
<div class="a" style="left:2px;top:96px;width:40px;height:18px;line-height:18px;font-size:12px;color:#dddddd;transform:rotate(-90deg);transform-origin:0 0">Project</div>
<svg class="a" style="left:4px;top:101px" width="14" height="11" viewBox="0 0 14 11"><path d="M0 0 H5 L6.5 2 H14 V11 H0 Z" fill="#afb1b3"/></svg>
<div class="a" style="left:4px;top:884px;width:60px;height:18px;line-height:18px;font-size:12px;color:#bbbbbb;transform:rotate(-90deg);transform-origin:0 0">Structure</div>
<svg class="a" style="left:6px;top:0px" width="18" height="15" viewBox="0 0 18 15"><rect x="1.2" y="-3" width="15.6" height="16.6" fill="#000" stroke="#1a7ff0" stroke-width="1.4"/><path d="M4.2 1.2 H6.8 M5.5 1.2 V6.6 M4.2 6.6 H6.8" stroke="#fff" stroke-width="1.3"/><path d="M8.6 1.2 H12 M11.2 1.2 V5 C11.2 7.3 9 7.3 8.2 6.2" fill="none" stroke="#fff" stroke-width="1.3"/><rect x="4" y="9.8" width="6" height="1.3" fill="#fff"/></svg>
<div class="a" style="left:35px;top:-2px;line-height:18px;font-size:13px;color:#bbbbbb;"><u>F</u>ile</div>
<div class="a" style="left:66px;top:-2px;line-height:18px;font-size:13px;color:#bbbbbb;"><u>E</u>dit</div>
<div class="a" style="left:101px;top:-2px;line-height:18px;font-size:13px;color:#bbbbbb;"><u>V</u>iew</div>
<div class="a" style="left:140px;top:-2px;line-height:18px;font-size:13px;color:#bbbbbb;"><u>N</u>avigate</div>
<div class="a" style="left:205px;top:-2px;line-height:18px;font-size:13px;color:#bbbbbb;"><u>C</u>ode</div>
<div class="a" style="left:248px;top:-2px;line-height:18px;font-size:13px;color:#bbbbbb;">Analy<u>z</u>e</div>
<div class="a" style="left:305px;top:-2px;line-height:18px;font-size:13px;color:#bbbbbb;"><u>R</u>efactor</div>
<div class="a" style="left:366px;top:-2px;line-height:18px;font-size:13px;color:#bbbbbb;"><u>B</u>uild</div>
<div class="a" style="left:407px;top:-2px;line-height:18px;font-size:13px;color:#bbbbbb;">R<u>u</u>n</div>
<div class="a" style="left:441px;top:-2px;line-height:18px;font-size:13px;color:#bbbbbb;"><u>T</u>ools</div>
<div class="a" style="left:487px;top:-2px;line-height:18px;font-size:13px;color:#bbbbbb;">VC<u>S</u></div>
<div class="a" style="left:522px;top:-2px;line-height:18px;font-size:13px;color:#bbbbbb;"><u>W</u>indow</div>
<div class="a" style="left:581px;top:-2px;line-height:18px;font-size:13px;color:#bbbbbb;"><u>H</u>elp</div>
<div class="a" style="left:634px;top:-3px;line-height:18px;font-size:12.6px;color:#9a9a9a;">xjar</div>
<div class="a" style="left:837px;top:6px;width:10px;height:1px;background:#bbbbbb;"></div>
<div class="a" style="left:884px;top:1px;width:10px;height:10px;border:1px solid #bbbbbb"></div>
<svg class="a" style="left:930px;top:1px" width="11" height="11" viewBox="0 0 11 11"><path d="M0.5 0.5 L10.5 10.5 M10.5 0.5 L0.5 10.5" stroke="#bbbbbb" stroke-width="1.1"/></svg>
<div class="a" style="left:12px;top:27px;line-height:18px;font-size:12.8px;color:#bbbbbb;font-weight:bold">xjar</div>
<svg class="a" style="left:39px;top:27px" width="6" height="16" viewBox="0 0 6 16"><path d="M1 1 L5 8 L1 15" fill="none" stroke="#5e6060" stroke-width="1"/></svg>
<div class="a" style="left:51px;top:27px;line-height:18px;font-size:12.8px;color:#bbbbbb;">lib</div>
<svg class="a" style="left:69px;top:27px" width="6" height="16" viewBox="0 0 6 16"><path d="M1 1 L5 8 L1 15" fill="none" stroke="#5e6060" stroke-width="1"/></svg>
<div class="a" style="left:81px;top:27px;line-height:18px;font-size:12.6px;color:#bbbbbb;font-weight:bold">saas-out.jar</div>
<svg class="a" style="left:156px;top:27px" width="6" height="16" viewBox="0 0 6 16"><path d="M1 1 L5 8 L1 15" fill="none" stroke="#5e6060" stroke-width="1"/></svg>
<div class="a" style="left:168px;top:27px;line-height:18px;font-size:12.8px;color:#bbbbbb;">io</div>
<svg class="a" style="left:184px;top:27px" width="6" height="16" viewBox="0 0 6 16"><path d="M1 1 L5 8 L1 15" fill="none" stroke="#5e6060" stroke-width="1"/></svg>
<div class="a" style="left:195px;top:27px;line-height:18px;font-size:12.8px;color:#bbbbbb;">xjar</div>
<svg class="a" style="left:221px;top:27px" width="6" height="16" viewBox="0 0 6 16"><path d="M1 1 L5 8 L1 15" fill="none" stroke="#5e6060" stroke-width="1"/></svg>
<svg class="a" style="left:230px;top:28px" width="14" height="14" viewBox="0 0 14 14"><circle cx="7" cy="7" r="7" fill="#5a9645"/><path d="M5 4 H9 M7 4 V10 M5 10 H9" stroke="#1e3a14" stroke-width="1.2"/></svg>
<div class="a" style="left:248px;top:27px;line-height:18px;font-size:12.4px;color:#bbbbbb;">XConstants</div>
<svg class="a" style="left:316px;top:27px" width="6" height="16" viewBox="0 0 6 16"><path d="M1 1 L5 8 L1 15" fill="none" stroke="#5e6060" stroke-width="1"/></svg>
<svg class="a" style="left:325px;top:26px" width="17" height="18" viewBox="0 0 17 18"><circle cx="9" cy="9" r="7.5" fill="#c8923a"/><text x="6.5" y="13" font-family="Liberation Sans" font-size="10" fill="#3c2a08">f</text><path d="M1.5 13.5 L4 11 L6.5 13.5 L4 16 Z" fill="none" stroke="#aab" stroke-width="1"/><circle cx="6" cy="3" r="1.8" fill="#aaaaaa"/></svg>
<div class="a" style="left:345px;top:27px;line-height:18px;font-size:12.0px;color:#bbbbbb;">DEFAULT_ALGORITHM</div>
<svg class="a" style="left:513px;top:27px" width="30" height="16" viewBox="0 0 30 16"><circle cx="9" cy="5" r="3.6" fill="#afb1b3"/><path d="M1.5 15 C1.5 10 4.5 9 9 9 C13.5 9 16.5 10 16.5 15 Z" fill="#afb1b3"/><circle cx="5.5" cy="4.5" r="3" fill="#8d8f91"/><path d="M22 7 L25 10 L28 7 Z" fill="#afb1b3"/></svg>
<div class="a" style="left:548px;top:25px;width:1px;height:19px;background:#515151;"></div>
<svg class="a" style="left:555px;top:27px" width="20" height="17" viewBox="0 0 20 17"><path d="M2 5 L8 1 L11 3 L8 6 Z" fill="#499c54"/><path d="M7 5 L16 15" stroke="#499c54" stroke-width="3"/></svg>
<div class="a" style="left:583px;top:24px;width:144px;height:22px;border:1px solid #5e6060;border-radius:3px;background:#3c3f41"></div>
<svg class="a" style="left:591px;top:27px" width="18" height="17" viewBox="0 0 18 17"><rect x="3.5" y="1.5" width="11" height="9" fill="none" stroke="#afb1b3"/><rect x="1" y="5" width="11" height="7" fill="#3c3f41" stroke="#afb1b3"/><rect x="2" y="7" width="9" height="4" fill="#3592c4"/><path d="M6 5 H12 M10 3.5 L12 5 L10 6.5" stroke="#afb1b3" fill="none"/><circle cx="13" cy="14" r="2" fill="#29c329"/></svg>
<div class="a" style="left:612px;top:27px;line-height:18px;font-size:12.8px;color:#bbbbbb;">Remote_Debug</div>
<svg class="a" style="left:708px;top:31px" width="10" height="7" viewBox="0 0 10 7"><path d="M0.5 0.5 H9.5 L5 6 Z" fill="#afb1b3"/></svg>
<svg class="a" style="left:739px;top:27px" width="14" height="16" viewBox="0 0 14 16"><path d="M2 1.5 L12 8 L2 14.5 Z" fill="#5b5d5f"/></svg>
<svg class="a" style="left:764px;top:26px" width="18" height="18" viewBox="0 0 18 18"><ellipse cx="8" cy="10" rx="5" ry="6" fill="#499c54"/><path d="M1 6 H15 M1 10 H15 M2 14 H14 M5 1 L7 4 M11 1 L9 4" stroke="#499c54" stroke-width="1.5"/><path d="M3 8 H13 M3 12 H13" stroke="#3c3f41" stroke-width="1"/><circle cx="14" cy="15" r="2.2" fill="#29c329"/></svg>
<svg class="a" style="left:789px;top:27px" width="18" height="17" viewBox="0 0 18 17"><path d="M1 2 H10 V13 H5 V8 H1 Z" fill="#5b5d5f"/><path d="M9 6 L16 11 L9 16 Z" fill="#5b5d5f"/></svg>
<svg class="a" style="left:812px;top:26px" width="18" height="18" viewBox="0 0 18 18"><circle cx="8" cy="8" r="6" fill="none" stroke="#5b5d5f" stroke-width="2"/><path d="M8 4 V8 L11 10" stroke="#5b5d5f" stroke-width="1.5"/><path d="M9 8 L16 12.5 L9 17 Z" fill="#5b5d5f"/></svg>
<svg class="a" style="left:835px;top:32px" width="9" height="6" viewBox="0 0 9 6"><path d="M0.5 0.5 H8.5 L4.5 5.5 Z" fill="#afb1b3"/></svg>
<div class="a" style="left:854px;top:30px;width:11px;height:11px;background:#c75450;"></div>
<div class="a" style="left:878px;top:25px;width:1px;height:19px;background:#515151;"></div>
<svg class="a" style="left:885px;top:28px" width="15" height="15" viewBox="0 0 15 15"><circle cx="6" cy="6" r="4.5" fill="none" stroke="#dfe1e5" stroke-width="1.8"/><path d="M9.3 9.3 L14 14" stroke="#dfe1e5" stroke-width="2"/></svg>
<svg class="a" style="left:911px;top:27px" width="17" height="17" viewBox="0 0 17 17"><circle cx="8.5" cy="8.5" r="8" fill="#f5a623"/><path d="M8.5 13 V4.5 M5 8 L8.5 4.5 L12 8" stroke="#fff" stroke-width="1.8" fill="none"/></svg>
<svg class="a" style="left:937px;top:26px" width="8" height="18" viewBox="0 0 8 18"><path d="M0 9 C0 3 4 0 8 0 V18 C4 18 0 15 0 9 Z" fill="#35c6e8"/><path d="M3 2 C5 1 8 1 8 1 V8 L3 9 Z" fill="#f8e71c"/></svg>
<div class="a" style="left:21px;top:49px;width:479px;height:27px;background:#3c3f41;"></div>
<div class="a" style="left:21px;top:76px;width:479px;height:1px;background:#323232;"></div>
<svg class="a" style="left:31px;top:57px" width="15" height="14" viewBox="0 0 15 14"><rect x="0.5" y="0.5" width="14" height="13" fill="none" stroke="#8e9294"/><rect x="0.5" y="0.5" width="14" height="2.5" fill="#8e9294"/><rect x="2" y="4" width="11" height="8.5" fill="#3592c4"/></svg>
<div class="a" style="left:50px;top:55px;line-height:18px;font-size:12.8px;color:#bbbbbb;">Project</div>
<svg class="a" style="left:98px;top:61px" width="10" height="6" viewBox="0 0 10 6"><path d="M0.5 0.5 H9.5 L5 5.5 Z" fill="#afb1b3"/></svg>
<svg class="a" style="left:369px;top:56px" width="15" height="15" viewBox="0 0 15 15"><circle cx="7.5" cy="7.5" r="6" fill="none" stroke="#afb1b3" stroke-width="1.5"/><path d="M7.5 0.5 V5 M7.5 10 V14.5 M0.5 7.5 H5 M10 7.5 H14.5" stroke="#afb1b3" stroke-width="1.5"/></svg>
<svg class="a" style="left:395px;top:56px" width="14" height="15" viewBox="0 0 14 15"><path d="M1 1 H13 M1 14 H13" stroke="#afb1b3" stroke-width="1.5"/><path d="M3.5 6 L7 3 L10.5 6 Z M3.5 9 L7 12 L10.5 9 Z" fill="#afb1b3"/><path d="M7 5 V10" stroke="#afb1b3"/></svg>
<svg class="a" style="left:421px;top:56px" width="14" height="15" viewBox="0 0 14 15"><path d="M1 7.5 H13" stroke="#afb1b3" stroke-width="1.5"/><path d="M3.5 1.5 L7 5 L10.5 1.5 Z M3.5 13.5 L7 10 L10.5 13.5 Z" fill="#afb1b3"/><path d="M7 0 V4 M7 11 V15" stroke="#afb1b3"/></svg>
<div class="a" style="left:445px;top:53px;width:1px;height:19px;background:#515151;"></div>
<svg class="a" style="left:454px;top:56px" width="15" height="15" viewBox="0 0 15 15"><circle cx="7.5" cy="7.5" r="3.6" fill="none" stroke="#afb1b3" stroke-width="3"/><circle cx="7.5" cy="7.5" r="5.6" fill="none" stroke="#afb1b3" stroke-width="2.6" stroke-dasharray="2.8 3.06" transform="rotate(-105 7.5 7.5)"/></svg>
<div class="a" style="left:481px;top:62px;width:12px;height:2px;background:#afb1b3;"></div>
<div class="a" style="left:21px;top:77px;width:479px;height:504px;background:#3c3f41;"></div>
<div class="a" style="left:21px;top:137px;width:480px;height:444px;background:#4e4a3f;"></div>
<div class="a" style="left:21px;top:297px;width:480px;height:20px;background:#0d293e;"></div>
<svg class="a" style="left:67px;top:81px" width="7" height="11" viewBox="0 0 7 11"><path d="M1.5 1 L5.5 5.5 L1.5 10" fill="none" stroke="#afb1b3" stroke-width="1.2"/></svg>
<svg class="a" style="left:83px;top:80px" width="15" height="12" viewBox="0 0 15 12"><path d="M0 0.5 H5.5 L7 2.5 H15 V11.5 H0 Z" fill="#909aa2"/></svg>
<div class="a" style="left:101px;top:78px;line-height:18px;font-size:13px;color:#bbbbbb;">.idea</div>
<svg class="a" style="left:67px;top:101px" width="7" height="11" viewBox="0 0 7 11"><path d="M1.5 1 L5.5 5.5 L1.5 10" fill="none" stroke="#afb1b3" stroke-width="1.2"/></svg>
<svg class="a" style="left:85px;top:99px" width="12" height="14" viewBox="0 0 12 14"><rect x="0.5" y="0" width="11" height="14" fill="#8c9196"/><rect x="4" y="0" width="4" height="14" fill="#2e8ba8"/><path d="M4 1 H8 M4 3 H8 M4 5 H8 M4 7 H8 M4 9 H8 M4 11 H8 M4 13 H8" stroke="#b9d6e0" stroke-width="0.7"/></svg>
<div class="a" style="left:101px;top:98px;line-height:18px;font-size:13px;color:#bbbbbb;">commons-compress-1.21.jar</div>
<svg class="a" style="left:64px;top:123px" width="11" height="7" viewBox="0 0 11 7"><path d="M1 1.5 L5.5 5.5 L10 1.5" fill="none" stroke="#afb1b3" stroke-width="1.2"/></svg>
<svg class="a" style="left:85px;top:119px" width="12" height="14" viewBox="0 0 12 14"><rect x="0.5" y="0" width="11" height="14" fill="#8c9196"/><rect x="4" y="0" width="4" height="14" fill="#2e8ba8"/><path d="M4 1 H8 M4 3 H8 M4 5 H8 M4 7 H8 M4 9 H8 M4 11 H8 M4 13 H8" stroke="#b9d6e0" stroke-width="0.7"/></svg>
<div class="a" style="left:101px;top:118px;line-height:18px;font-size:13px;color:#bbbbbb;">saas-out.jar</div>
<svg class="a" style="left:86px;top:141px" width="7" height="11" viewBox="0 0 7 11"><path d="M1.5 1 L5.5 5.5 L1.5 10" fill="none" stroke="#afb1b3" stroke-width="1.2"/></svg>
<svg class="a" style="left:101px;top:140px" width="15" height="12" viewBox="0 0 15 12"><path d="M0 0.5 H5.5 L7 2.5 H15 V11.5 H0 Z" fill="#909aa2"/></svg>
<div class="a" style="left:119px;top:138px;line-height:18px;font-size:13px;color:#bbbbbb;">BOOT-INF</div>
<svg class="a" style="left:83px;top:163px" width="11" height="7" viewBox="0 0 11 7"><path d="M1 1.5 L5.5 5.5 L10 1.5" fill="none" stroke="#afb1b3" stroke-width="1.2"/></svg>
<svg class="a" style="left:101px;top:160px" width="15" height="12" viewBox="0 0 15 12"><path d="M0 0.5 H5.5 L7 2.5 H15 V11.5 H0 Z" fill="#909aa2"/></svg>
<div class="a" style="left:119px;top:158px;line-height:18px;font-size:13px;color:#bbbbbb;">io.xjar</div>
<svg class="a" style="left:104px;top:181px" width="7" height="11" viewBox="0 0 7 11"><path d="M1.5 1 L5.5 5.5 L1.5 10" fill="none" stroke="#afb1b3" stroke-width="1.2"/></svg>
<svg class="a" style="left:119px;top:180px" width="15" height="12" viewBox="0 0 15 12"><path d="M0 0.5 H5.5 L7 2.5 H15 V11.5 H0 Z" fill="#909aa2"/></svg>
<div class="a" style="left:137px;top:178px;line-height:18px;font-size:13px;color:#bbbbbb;">boot</div>
<svg class="a" style="left:104px;top:201px" width="7" height="11" viewBox="0 0 7 11"><path d="M1.5 1 L5.5 5.5 L1.5 10" fill="none" stroke="#afb1b3" stroke-width="1.2"/></svg>
<svg class="a" style="left:119px;top:200px" width="15" height="12" viewBox="0 0 15 12"><path d="M0 0.5 H5.5 L7 2.5 H15 V11.5 H0 Z" fill="#909aa2"/></svg>
<div class="a" style="left:137px;top:198px;line-height:18px;font-size:13px;color:#bbbbbb;">dir</div>
<svg class="a" style="left:104px;top:221px" width="7" height="11" viewBox="0 0 7 11"><path d="M1.5 1 L5.5 5.5 L1.5 10" fill="none" stroke="#afb1b3" stroke-width="1.2"/></svg>
<svg class="a" style="left:119px;top:220px" width="15" height="12" viewBox="0 0 15 12"><path d="M0 0.5 H5.5 L7 2.5 H15 V11.5 H0 Z" fill="#909aa2"/></svg>
<div class="a" style="left:137px;top:218px;line-height:18px;font-size:13px;color:#bbbbbb;">filter</div>
<svg class="a" style="left:104px;top:241px" width="7" height="11" viewBox="0 0 7 11"><path d="M1.5 1 L5.5 5.5 L1.5 10" fill="none" stroke="#afb1b3" stroke-width="1.2"/></svg>
<svg class="a" style="left:119px;top:240px" width="15" height="12" viewBox="0 0 15 12"><path d="M0 0.5 H5.5 L7 2.5 H15 V11.5 H0 Z" fill="#909aa2"/></svg>
<div class="a" style="left:137px;top:238px;line-height:18px;font-size:13px;color:#bbbbbb;">jar</div>
<svg class="a" style="left:104px;top:261px" width="7" height="11" viewBox="0 0 7 11"><path d="M1.5 1 L5.5 5.5 L1.5 10" fill="none" stroke="#afb1b3" stroke-width="1.2"/></svg>
<svg class="a" style="left:119px;top:260px" width="15" height="12" viewBox="0 0 15 12"><path d="M0 0.5 H5.5 L7 2.5 H15 V11.5 H0 Z" fill="#909aa2"/></svg>
<div class="a" style="left:137px;top:258px;line-height:18px;font-size:13px;color:#bbbbbb;">key</div>
<svg class="a" style="left:104px;top:281px" width="7" height="11" viewBox="0 0 7 11"><path d="M1.5 1 L5.5 5.5 L1.5 10" fill="none" stroke="#afb1b3" stroke-width="1.2"/></svg>
<svg class="a" style="left:119px;top:280px" width="15" height="12" viewBox="0 0 15 12"><path d="M0 0.5 H5.5 L7 2.5 H15 V11.5 H0 Z" fill="#909aa2"/></svg>
<div class="a" style="left:137px;top:278px;line-height:18px;font-size:13px;color:#bbbbbb;">zip</div>
<svg class="a" style="left:119px;top:300px" width="16" height="16" viewBox="0 0 16 16"><circle cx="7" cy="7" r="7" fill="#5b8f42"/><path d="M5.2 4.2 H8.8 M7 4.2 V9.8 M5.2 9.8 H8.8" stroke="#2a3a22" stroke-width="1"/><rect x="10" y="10" width="5.5" height="5" rx="0.5" fill="#c0c0c0"/><path d="M11 10.5 V9 C11 7.3 14.5 7.3 14.5 9 V10.5" fill="none" stroke="#c0c0c0" stroke-width="1"/></svg>
<div class="a" style="left:137px;top:298px;line-height:18px;font-size:12.8px;color:#bbbbbb;">XConstants</div>
<svg class="a" style="left:119px;top:320px" width="16" height="16" viewBox="0 0 16 16"><circle cx="7" cy="7" r="7" fill="#5b8f42"/><path d="M5.2 4.2 H8.8 M7 4.2 V9.8 M5.2 9.8 H8.8" stroke="#2a3a22" stroke-width="1"/><rect x="10" y="10" width="5.5" height="5" rx="0.5" fill="#c0c0c0"/><path d="M11 10.5 V9 C11 7.3 14.5 7.3 14.5 9 V10.5" fill="none" stroke="#c0c0c0" stroke-width="1"/></svg>
<div class="a" style="left:137px;top:318px;line-height:18px;font-size:12.8px;color:#bbbbbb;">XDecryptor</div>
<svg class="a" style="left:119px;top:340px" width="16" height="16" viewBox="0 0 16 16"><circle cx="7" cy="7" r="7" fill="#5b8f42"/><path d="M5.2 4.2 H8.8 M7 4.2 V9.8 M5.2 9.8 H8.8" stroke="#2a3a22" stroke-width="1"/><rect x="10" y="10" width="5.5" height="5" rx="0.5" fill="#c0c0c0"/><path d="M11 10.5 V9 C11 7.3 14.5 7.3 14.5 9 V10.5" fill="none" stroke="#c0c0c0" stroke-width="1"/></svg>
<div class="a" style="left:137px;top:338px;line-height:18px;font-size:12.8px;color:#bbbbbb;">XEncryptor</div>
<svg class="a" style="left:119px;top:360px" width="16" height="16" viewBox="0 0 16 16"><circle cx="7" cy="7" r="7" fill="#3b90b4"/><path d="M9 5 C8.5 4 7.6 3.8 7 3.8 C5.3 3.8 4.6 5.3 4.6 7 C4.6 8.7 5.3 10.2 7 10.2 C7.6 10.2 8.5 10 9 9" fill="none" stroke="#1f3f52" stroke-width="1"/><path d="M1.2 3 C-0.2 5.5 -0.2 8.5 1.2 11" fill="none" stroke="#c8c8c8" stroke-width="1"/><rect x="10" y="10" width="5.5" height="5" rx="0.5" fill="#c0c0c0"/><path d="M11 10.5 V9 C11 7.3 14.5 7.3 14.5 9 V10.5" fill="none" stroke="#c0c0c0" stroke-width="1"/></svg>
<div class="a" style="left:137px;top:358px;line-height:18px;font-size:12.8px;color:#bbbbbb;">XEntryDecryptor</div>
<svg class="a" style="left:119px;top:380px" width="16" height="16" viewBox="0 0 16 16"><circle cx="7" cy="7" r="7" fill="#3b90b4"/><path d="M9 5 C8.5 4 7.6 3.8 7 3.8 C5.3 3.8 4.6 5.3 4.6 7 C4.6 8.7 5.3 10.2 7 10.2 C7.6 10.2 8.5 10 9 9" fill="none" stroke="#1f3f52" stroke-width="1"/><path d="M1.2 3 C-0.2 5.5 -0.2 8.5 1.2 11" fill="none" stroke="#c8c8c8" stroke-width="1"/><rect x="10" y="10" width="5.5" height="5" rx="0.5" fill="#c0c0c0"/><path d="M11 10.5 V9 C11 7.3 14.5 7.3 14.5 9 V10.5" fill="none" stroke="#c0c0c0" stroke-width="1"/></svg>
<div class="a" style="left:137px;top:378px;line-height:18px;font-size:12.8px;color:#bbbbbb;">XEntryEncryptor</div>
<svg class="a" style="left:119px;top:400px" width="16" height="16" viewBox="0 0 16 16"><circle cx="7" cy="7" r="7" fill="#5b8f42"/><path d="M5.2 4.2 H8.8 M7 4.2 V9.8 M5.2 9.8 H8.8" stroke="#2a3a22" stroke-width="1"/><rect x="10" y="10" width="5.5" height="5" rx="0.5" fill="#c0c0c0"/><path d="M11 10.5 V9 C11 7.3 14.5 7.3 14.5 9 V10.5" fill="none" stroke="#c0c0c0" stroke-width="1"/></svg>
<div class="a" style="left:137px;top:398px;line-height:18px;font-size:12.8px;color:#bbbbbb;">XEntryFilter</div>
<svg class="a" style="left:119px;top:420px" width="16" height="16" viewBox="0 0 16 16"><circle cx="7" cy="7" r="7" fill="#3b90b4"/><path d="M9 5 C8.5 4 7.6 3.8 7 3.8 C5.3 3.8 4.6 5.3 4.6 7 C4.6 8.7 5.3 10.2 7 10.2 C7.6 10.2 8.5 10 9 9" fill="none" stroke="#1f3f52" stroke-width="1"/><rect x="10" y="10" width="5.5" height="5" rx="0.5" fill="#c0c0c0"/><path d="M11 10.5 V9 C11 7.3 14.5 7.3 14.5 9 V10.5" fill="none" stroke="#c0c0c0" stroke-width="1"/></svg>
<div class="a" style="left:137px;top:418px;line-height:18px;font-size:12.8px;color:#bbbbbb;">XInjector</div>
<svg class="a" style="left:119px;top:440px" width="16" height="16" viewBox="0 0 16 16"><circle cx="7" cy="7" r="7" fill="#3b90b4"/><path d="M9 5 C8.5 4 7.6 3.8 7 3.8 C5.3 3.8 4.6 5.3 4.6 7 C4.6 8.7 5.3 10.2 7 10.2 C7.6 10.2 8.5 10 9 9" fill="none" stroke="#1f3f52" stroke-width="1"/><rect x="10" y="10" width="5.5" height="5" rx="0.5" fill="#c0c0c0"/><path d="M11 10.5 V9 C11 7.3 14.5 7.3 14.5 9 V10.5" fill="none" stroke="#c0c0c0" stroke-width="1"/></svg>
<div class="a" style="left:137px;top:438px;line-height:18px;font-size:12.8px;color:#bbbbbb;">XJdkDecryptor</div>
<svg class="a" style="left:119px;top:460px" width="16" height="16" viewBox="0 0 16 16"><circle cx="7" cy="7" r="7" fill="#3b90b4"/><path d="M9 5 C8.5 4 7.6 3.8 7 3.8 C5.3 3.8 4.6 5.3 4.6 7 C4.6 8.7 5.3 10.2 7 10.2 C7.6 10.2 8.5 10 9 9" fill="none" stroke="#1f3f52" stroke-width="1"/><rect x="10" y="10" width="5.5" height="5" rx="0.5" fill="#c0c0c0"/><path d="M11 10.5 V9 C11 7.3 14.5 7.3 14.5 9 V10.5" fill="none" stroke="#c0c0c0" stroke-width="1"/></svg>
<div class="a" style="left:137px;top:458px;line-height:18px;font-size:12.8px;color:#bbbbbb;">XJdkEncryptor</div>
<svg class="a" style="left:119px;top:480px" width="16" height="16" viewBox="0 0 16 16"><circle cx="7" cy="7" r="7" fill="#3b90b4"/><path d="M9 5 C8.5 4 7.6 3.8 7 3.8 C5.3 3.8 4.6 5.3 4.6 7 C4.6 8.7 5.3 10.2 7 10.2 C7.6 10.2 8.5 10 9 9" fill="none" stroke="#1f3f52" stroke-width="1"/><path d="M1.2 3 C-0.2 5.5 -0.2 8.5 1.2 11" fill="none" stroke="#c8c8c8" stroke-width="1"/><rect x="10" y="10" width="5.5" height="5" rx="0.5" fill="#c0c0c0"/><path d="M11 10.5 V9 C11 7.3 14.5 7.3 14.5 9 V10.5" fill="none" stroke="#c0c0c0" stroke-width="1"/></svg>
<div class="a" style="left:137px;top:478px;line-height:18px;font-size:12.8px;color:#bbbbbb;">XKit</div>
<svg class="a" style="left:119px;top:500px" width="16" height="16" viewBox="0 0 16 16"><circle cx="7" cy="7" r="7" fill="#3b90b4"/><path d="M9 5 C8.5 4 7.6 3.8 7 3.8 C5.3 3.8 4.6 5.3 4.6 7 C4.6 8.7 5.3 10.2 7 10.2 C7.6 10.2 8.5 10 9 9" fill="none" stroke="#1f3f52" stroke-width="1"/><rect x="10" y="10" width="5.5" height="5" rx="0.5" fill="#c0c0c0"/><path d="M11 10.5 V9 C11 7.3 14.5 7.3 14.5 9 V10.5" fill="none" stroke="#c0c0c0" stroke-width="1"/></svg>
<div class="a" style="left:137px;top:498px;line-height:18px;font-size:12.8px;color:#bbbbbb;">XLauncher</div>
<svg class="a" style="left:119px;top:520px" width="16" height="16" viewBox="0 0 16 16"><circle cx="7" cy="7" r="7" fill="#3b90b4"/><path d="M9 5 C8.5 4 7.6 3.8 7 3.8 C5.3 3.8 4.6 5.3 4.6 7 C4.6 8.7 5.3 10.2 7 10.2 C7.6 10.2 8.5 10 9 9" fill="none" stroke="#1f3f52" stroke-width="1"/><rect x="10" y="10" width="5.5" height="5" rx="0.5" fill="#c0c0c0"/><path d="M11 10.5 V9 C11 7.3 14.5 7.3 14.5 9 V10.5" fill="none" stroke="#c0c0c0" stroke-width="1"/></svg>
<div class="a" style="left:137px;top:518px;line-height:18px;font-size:12.8px;color:#bbbbbb;">XNopDecryptor</div>
<svg class="a" style="left:119px;top:540px" width="16" height="16" viewBox="0 0 16 16"><circle cx="7" cy="7" r="7" fill="#3b90b4"/><path d="M9 5 C8.5 4 7.6 3.8 7 3.8 C5.3 3.8 4.6 5.3 4.6 7 C4.6 8.7 5.3 10.2 7 10.2 C7.6 10.2 8.5 10 9 9" fill="none" stroke="#1f3f52" stroke-width="1"/><rect x="10" y="10" width="5.5" height="5" rx="0.5" fill="#c0c0c0"/><path d="M11 10.5 V9 C11 7.3 14.5 7.3 14.5 9 V10.5" fill="none" stroke="#c0c0c0" stroke-width="1"/></svg>
<div class="a" style="left:137px;top:538px;line-height:18px;font-size:12.8px;color:#bbbbbb;">XNopEncryptor</div>
<svg class="a" style="left:119px;top:560px" width="16" height="16" viewBox="0 0 16 16"><circle cx="7" cy="7" r="7" fill="#3b90b4"/><path d="M9 5 C8.5 4 7.6 3.8 7 3.8 C5.3 3.8 4.6 5.3 4.6 7 C4.6 8.7 5.3 10.2 7 10.2 C7.6 10.2 8.5 10 9 9" fill="none" stroke="#1f3f52" stroke-width="1"/><rect x="10" y="10" width="5.5" height="5" rx="0.5" fill="#c0c0c0"/><path d="M11 10.5 V9 C11 7.3 14.5 7.3 14.5 9 V10.5" fill="none" stroke="#c0c0c0" stroke-width="1"/></svg>
<div class="a" style="left:137px;top:558px;line-height:18px;font-size:12.8px;color:#bbbbbb;">XUnclosedInputStream</div>
<svg class="a" style="left:119px;top:580px" width="16" height="16" viewBox="0 0 16 16"><circle cx="7" cy="7" r="7" fill="#3b90b4"/><path d="M9 5 C8.5 4 7.6 3.8 7 3.8 C5.3 3.8 4.6 5.3 4.6 7 C4.6 8.7 5.3 10.2 7 10.2 C7.6 10.2 8.5 10 9 9" fill="none" stroke="#1f3f52" stroke-width="1"/><rect x="10" y="10" width="5.5" height="5" rx="0.5" fill="#c0c0c0"/><path d="M11 10.5 V9 C11 7.3 14.5 7.3 14.5 9 V10.5" fill="none" stroke="#c0c0c0" stroke-width="1"/></svg>
<div class="a" style="left:137px;top:578px;line-height:18px;font-size:12.8px;color:#bbbbbb;">XUnclosedOutputStream</div>
<div class="a" style="left:492px;top:116px;width:8px;height:316px;background:rgba(170,170,165,0.28);"></div>
<div class="a" style="left:21px;top:577px;width:480px;height:4px;background:#4e4a3f;"></div>
<div class="a" style="left:501px;top:49px;width:1px;height:28px;background:#2b2b2b;"></div>
<div class="a" style="left:502px;top:49px;width:438px;height:28px;background:#3c3f41;"></div>
<div class="a" style="left:502px;top:49px;width:408px;height:28px;background:#47443c;"></div>
<div class="a" style="left:764px;top:49px;width:146px;height:25px;background:#524d41;"></div>
<div class="a" style="left:764px;top:74px;width:146px;height:3px;background:#4a88c7;"></div>
<div class="a" style="left:506px;top:55px;line-height:18px;font-size:12.8px;color:#bbbbbb;">Cipher.class</div>
<svg class="a" style="left:582px;top:59px" width="9" height="9" viewBox="0 0 9 9"><path d="M0.5 0.5 L8.5 8.5 M8.5 0.5 L0.5 8.5" stroke="#6e6e6e" stroke-width="1"/></svg>
<svg class="a" style="left:606px;top:56px" width="16" height="16" viewBox="0 0 16 16"><circle cx="7" cy="7" r="7" fill="#3d8eb0"/><path d="M9.2 5 C8.5 3.8 7.6 3.5 7 3.5 C5 3.5 4.2 5.2 4.2 7 C4.2 8.8 5 10.5 7 10.5 C7.6 10.5 8.5 10.2 9.2 9" fill="none" stroke="#173447" stroke-width="1.3"/><rect x="10" y="10" width="5.5" height="5" rx="0.5" fill="#c0c0c0"/><path d="M11 10.5 V9 C11 7.3 14.5 7.3 14.5 9 V10.5" fill="none" stroke="#c0c0c0" stroke-width="1"/></svg>
<div class="a" style="left:625px;top:55px;line-height:18px;font-size:12.8px;color:#bbbbbb;">XJdkDecryptor.class</div>
<svg class="a" style="left:749px;top:59px" width="9" height="9" viewBox="0 0 9 9"><path d="M0.5 0.5 L8.5 8.5 M8.5 0.5 L0.5 8.5" stroke="#6e6e6e" stroke-width="1"/></svg>
<svg class="a" style="left:773px;top:56px" width="16" height="16" viewBox="0 0 16 16"><circle cx="7" cy="7" r="7" fill="#5a9645"/><path d="M5 4 H9 M7 4 V10 M5 10 H9" stroke="#1f3d16" stroke-width="1.2"/><rect x="10" y="10" width="5.5" height="5" rx="0.5" fill="#c0c0c0"/><path d="M11 10.5 V9 C11 7.3 14.5 7.3 14.5 9 V10.5" fill="none" stroke="#c0c0c0" stroke-width="1"/></svg>
<div class="a" style="left:792px;top:55px;line-height:18px;font-size:12.8px;color:#bbbbbb;">XConstants.class</div>
<svg class="a" style="left:895px;top:59px" width="9" height="9" viewBox="0 0 9 9"><path d="M0.5 0.5 L8.5 8.5 M8.5 0.5 L0.5 8.5" stroke="#6e6e6e" stroke-width="1"/></svg>
<svg class="a" style="left:919px;top:60px" width="11" height="7" viewBox="0 0 11 7"><path d="M1 1 L5.5 5.5 L10 1" fill="none" stroke="#afb1b3" stroke-width="1.5"/></svg>
<div class="a" style="left:938px;top:49px;width:2px;height:533px;background:#323232;"></div>
<div class="a" style="left:502px;top:77px;width:438px;height:27px;background:#1d3a5a;"></div>
<div class="a" style="left:512px;top:82px;line-height:18px;font-size:12.9px;color:#bbbbbb;">Decompiled .class file, bytecode ve...</div>
<div class="a" style="left:730px;top:82px;line-height:18px;font-size:12.9px;color:#589df6;">Download...</div>
<div class="a" style="left:818px;top:82px;line-height:18px;font-size:12.7px;color:#589df6;">Choose Sources...</div>
<div class="a" style="left:502px;top:104px;width:436px;height:478px;background:#2b2b2b;"></div>
<div class="a" style="left:502px;top:104px;width:58px;height:478px;background:#313335;"></div>
<div class="a" style="left:560px;top:104px;width:1px;height:478px;background:#555555;"></div>
<div class="a" style="left:502px;top:104px;width:436px;height:1px;background:#454545;"></div>
<div class="a" style="left:561px;top:347px;width:377px;height:22px;background:#323232;"></div>
<div class="a" style="left:501px;top:107px;width:21px;text-align:right;line-height:22px;font-family:&quot;Liberation Mono&quot;,monospace;font-size:12.6px;color:#606366">21</div>
<div class="a" style="left:501px;top:129px;width:21px;text-align:right;line-height:22px;font-family:&quot;Liberation Mono&quot;,monospace;font-size:12.6px;color:#606366">22</div>
<div class="a" style="left:501px;top:151px;width:21px;text-align:right;line-height:22px;font-family:&quot;Liberation Mono&quot;,monospace;font-size:12.6px;color:#606366">23</div>
<div class="a" style="left:501px;top:173px;width:21px;text-align:right;line-height:22px;font-family:&quot;Liberation Mono&quot;,monospace;font-size:12.6px;color:#606366">24</div>
<div class="a" style="left:501px;top:195px;width:21px;text-align:right;line-height:22px;font-family:&quot;Liberation Mono&quot;,monospace;font-size:12.6px;color:#606366">25</div>
<div class="a" style="left:501px;top:217px;width:21px;text-align:right;line-height:22px;font-family:&quot;Liberation Mono&quot;,monospace;font-size:12.6px;color:#606366">26</div>
<div class="a" style="left:501px;top:239px;width:21px;text-align:right;line-height:22px;font-family:&quot;Liberation Mono&quot;,monospace;font-size:12.6px;color:#606366">27</div>
<div class="a" style="left:501px;top:261px;width:21px;text-align:right;line-height:22px;font-family:&quot;Liberation Mono&quot;,monospace;font-size:12.6px;color:#606366">28</div>
<div class="a" style="left:501px;top:283px;width:21px;text-align:right;line-height:22px;font-family:&quot;Liberation Mono&quot;,monospace;font-size:12.6px;color:#606366">29</div>
<div class="a" style="left:501px;top:305px;width:21px;text-align:right;line-height:22px;font-family:&quot;Liberation Mono&quot;,monospace;font-size:12.6px;color:#606366">30</div>
<div class="a" style="left:501px;top:327px;width:21px;text-align:right;line-height:22px;font-family:&quot;Liberation Mono&quot;,monospace;font-size:12.6px;color:#606366">31</div>
<div class="a" style="left:501px;top:349px;width:21px;text-align:right;line-height:22px;font-family:&quot;Liberation Mono&quot;,monospace;font-size:12.6px;color:#a4a3a3">32</div>
<div class="a" style="left:501px;top:371px;width:21px;text-align:right;line-height:22px;font-family:&quot;Liberation Mono&quot;,monospace;font-size:12.6px;color:#606366">33</div>
<div class="a" style="left:501px;top:393px;width:21px;text-align:right;line-height:22px;font-family:&quot;Liberation Mono&quot;,monospace;font-size:12.6px;color:#606366">34</div>
<div class="a" style="left:501px;top:415px;width:21px;text-align:right;line-height:22px;font-family:&quot;Liberation Mono&quot;,monospace;font-size:12.6px;color:#606366">35</div>
<div class="a" style="left:501px;top:437px;width:21px;text-align:right;line-height:22px;font-family:&quot;Liberation Mono&quot;,monospace;font-size:12.6px;color:#606366">36</div>
<div class="a" style="left:501px;top:459px;width:21px;text-align:right;line-height:22px;font-family:&quot;Liberation Mono&quot;,monospace;font-size:12.6px;color:#606366">37</div>
<div class="a" style="left:501px;top:481px;width:21px;text-align:right;line-height:22px;font-family:&quot;Liberation Mono&quot;,monospace;font-size:12.6px;color:#606366">38</div>
<div class="a" style="left:501px;top:503px;width:21px;text-align:right;line-height:22px;font-family:&quot;Liberation Mono&quot;,monospace;font-size:12.6px;color:#606366">39</div>
<div class="icode" style="left:566px;top:106px;width:372px;height:476px;overflow:hidden"><div>    String <span class="ip">XJAR_PASSWORD</span> = <span class="is">&quot;--xj</span></div><div>    String <span class="ip">XJAR_KEYFILE</span> = <span class="is">&quot;--xjar.keyfile=&quot;</span><span class="ik">;</span></div><div>    String <span class="ip">XJAR_ALGORITHM_KEY</span> = <span class="is">&quot;XJar-Algorithm&quot;</span><span class="ik">;</span></div><div>    String <span class="ip">XJAR_KEYSIZE_KEY</span> = <span class="is">&quot;XJar-Keysize&quot;</span><span class="ik">;</span></div><div>    String <span class="ip">XJAR_IVSIZE_KEY</span> = <span class="is">&quot;XJar-Ivsize&quot;</span><span class="ik">;</span></div><div>    String <span class="ip">XJAR_PASSWORD_KEY</span> = <span class="is">&quot;XJar-Password&quot;</span><span class="ik">;</span></div><div>    String <span class="ip">XJAR_KEY_ALGORITHM</span> = <span class="is">&quot;algorithm&quot;</span><span class="ik">;</span></div><div>    String <span class="ip">XJAR_KEY_KEYSIZE</span> = <span class="is">&quot;keysize&quot;</span><span class="ik">;</span></div><div>    String <span class="ip">XJAR_KEY_IVSIZE</span> = <span class="is">&quot;ivsize&quot;</span><span class="ik">;</span></div><div>    String <span class="ip">XJAR_KEY_PASSWORD</span> = <span class="is">&quot;password&quot;</span><span class="ik">;</span></div><div>    String <span class="ip">XJAR_KEY_HOLD</span> = <span class="is">&quot;hold&quot;</span><span class="ik">;</span></div><div>    String <span class="ip">DEFAULT_ALGORITHM</span> = <span class="is">&quot;AES&quot;</span><span class="ik">;</span></div><div>    <span class="ik">int</span> <span class="ip">DEFAULT_KEYSIZE</span> = <span class="in">128</span><span class="ik">;</span></div><div>    <span class="ik">int</span> <span class="ip">DEFAULT_IVSIZE</span> = <span class="in">128</span><span class="ik">;</span></div><div>    <span class="ik">int</span> <span class="ip">FLAG_DANGER</span> = <span class="in">1</span><span class="ik">;</span></div><div>    <span class="ik">int</span> <span class="ip">MODE_DANGER</span> = <span class="in">1</span><span class="ik">;</span></div><div>    <span class="ik">int</span> <span class="ip">MODE_NORMAL</span> = <span class="in">0</span><span class="ik">;</span></div><div>}</div><div></div></div>
<div class="a" style="left:824px;top:105px;width:114px;height:24px;background:#2b2b2b;"></div>
<div class="a" style="left:841px;top:110px;line-height:18px;font-size:13.2px;color:#dfdfdf;">Reader Mode</div>
<div class="a" style="left:932px;top:109px;width:1px;height:18px;background:#4a4a4a;"></div>
<div class="a" style="left:573px;top:343px;width:303px;height:36px;border:2px solid #e0242a"></div>
<div class="a" style="left:929px;top:315px;width:8px;height:233px;background:#4e5052;border-radius:4px"></div>
<div class="a" style="left:925px;top:434px;width:15px;height:2px;background:#c86a7a;"></div>
<div class="a" style="left:567px;top:572px;width:146px;height:8px;background:#4d4d4d;"></div>
<div class="a" style="left:21px;top:581px;width:919px;height:291px;background:#3c3f41;"></div>
<div class="a" style="left:21px;top:581px;width:919px;height:1px;background:#323232;"></div>
<div class="a" style="left:938px;top:581px;width:6px;height:291px;background:#3c3f41;"></div>
<div class="a" style="left:938px;top:581px;width:1px;height:291px;background:#323232;"></div>
<div class="a" style="left:28px;top:587px;line-height:18px;font-size:12.9px;color:#bbbbbb;">Debug:</div>
<svg class="a" style="left:89px;top:588px" width="17" height="16" viewBox="0 0 17 16"><rect x="3.5" y="1.5" width="11" height="8.5" fill="none" stroke="#afb1b3"/><rect x="1" y="4.5" width="11" height="7.5" fill="#3c3f41" stroke="#afb1b3"/><rect x="2" y="7" width="9" height="4" fill="#3592c4"/><path d="M5 4.5 H12 M10 3 L12 4.5 L10 6" stroke="#afb1b3" fill="none"/><circle cx="13" cy="13.5" r="2" fill="#29c329"/></svg>
<div class="a" style="left:109px;top:587px;line-height:18px;font-size:12.6px;color:#bbbbbb;">Remote_Debug</div>
<svg class="a" style="left:205px;top:592px" width="8" height="8" viewBox="0 0 8 8"><path d="M0.5 0.5 L7.5 7.5 M7.5 0.5 L0.5 7.5" stroke="#6e6e6e" stroke-width="1"/></svg>
<div class="a" style="left:77px;top:606px;width:147px;height:3px;background:#747a80;"></div>
<div class="a" style="left:21px;top:608px;width:917px;height:1px;background:#323232;"></div>
<svg class="a" style="left:892px;top:588px" width="14" height="14" viewBox="0 0 15 15"><circle cx="7.5" cy="7.5" r="3.6" fill="none" stroke="#afb1b3" stroke-width="3"/><circle cx="7.5" cy="7.5" r="5.6" fill="none" stroke="#afb1b3" stroke-width="2.6" stroke-dasharray="2.8 3.06" transform="rotate(-105 7.5 7.5)"/></svg>
<div class="a" style="left:920px;top:594px;width:12px;height:2px;background:#afb1b3;"></div>
<div class="a" style="left:50px;top:609px;width:1px;height:263px;background:#323232;"></div>
<svg class="a" style="left:29px;top:615px" width="16" height="16" viewBox="0 0 16 16"><path d="M13 4 A6 6 0 1 0 8 14" fill="none" stroke="#499c54" stroke-width="2"/><path d="M10 1 L14.5 4.5 L9.5 7 Z" fill="#499c54"/><rect x="9" y="9" width="5" height="5" fill="#afb1b3"/></svg>
<svg class="a" style="left:29px;top:642px" width="15" height="15" viewBox="0 0 15 15"><path d="M2 13 L8 7" stroke="#afb1b3" stroke-width="2.5"/><path d="M7 6 A4 4 0 0 1 13 1.5 L10.5 4 L11 5 L12 5.5 L14.5 3 A4 4 0 0 1 9.5 9 Z" fill="#afb1b3"/></svg>
<div class="a" style="left:26px;top:665px;width:20px;height:1px;background:#515151;"></div>
<svg class="a" style="left:31px;top:675px" width="13" height="13" viewBox="0 0 13 13"><rect x="0" y="0" width="3" height="13" fill="#499c54"/><path d="M5 0 L13 6.5 L5 13 Z" fill="#499c54"/></svg>
<svg class="a" style="left:32px;top:701px" width="11" height="12" viewBox="0 0 11 12"><rect x="1" y="0" width="3" height="12" fill="#5b5d5f"/><rect x="7" y="0" width="3" height="12" fill="#5b5d5f"/></svg>
<div class="a" style="left:31px;top:728px;width:12px;height:11px;background:#c75450;"></div>
<div class="a" style="left:26px;top:750px;width:20px;height:1px;background:#515151;"></div>
<svg class="a" style="left:29px;top:759px" width="16" height="16" viewBox="0 0 16 16"><circle cx="10" cy="5.5" r="5" fill="#c75450"/><circle cx="6" cy="10.5" r="5.3" fill="#c75450" stroke="#3c3f41" stroke-width="1"/></svg>
<svg class="a" style="left:29px;top:785px" width="16" height="16" viewBox="0 0 16 16"><circle cx="8" cy="8" r="6.5" fill="#c75450"/><path d="M2 14 L14 2" stroke="#dcdcdc" stroke-width="1.6"/></svg>
<div class="a" style="left:26px;top:808px;width:20px;height:1px;background:#515151;"></div>
<div class="a" style="left:26px;top:842px;width:20px;height:1px;background:#515151;"></div>
<svg class="a" style="left:29px;top:819px" width="15" height="14" viewBox="0 0 15 14"><path d="M0.5 3 H4 L5.5 0.5 H9.5 L11 3 H14.5 V13.5 H0.5 Z" fill="#afb1b3"/><circle cx="7.5" cy="8" r="3" fill="#3c3f41"/><circle cx="7.5" cy="8" r="1.7" fill="#afb1b3"/></svg>
<svg class="a" style="left:28px;top:851px" width="18" height="18" viewBox="0 0 18 18"><circle cx="7.5" cy="7.5" r="3.6" fill="none" stroke="#afb1b3" stroke-width="3"/><circle cx="7.5" cy="7.5" r="5.6" fill="none" stroke="#afb1b3" stroke-width="2.6" stroke-dasharray="2.8 3.06" transform="rotate(-105 7.5 7.5)"/><path d="M13 15 L17 15 L15 17.5 Z" fill="#afb1b3"/></svg>
<div class="a" style="left:64px;top:614px;line-height:18px;font-size:11.9px;color:#bbbbbb;">Debugger</div>
<div class="a" style="left:51px;top:634px;width:78px;height:2px;background:#747a80;"></div>
<svg class="a" style="left:141px;top:617px" width="14" height="12" viewBox="0 0 14 12"><rect x="0" y="0" width="14" height="12" fill="#afb1b3"/><path d="M5 3 L8 6 L5 9" fill="none" stroke="#3c3f41" stroke-width="1.5"/></svg>
<div class="a" style="left:159px;top:614px;line-height:18px;font-size:12.3px;color:#bbbbbb;">Console</div>
<svg class="a" style="left:217px;top:617px" width="13" height="12" viewBox="0 0 13 12"><rect x="0" y="0" width="13" height="2" fill="#afb1b3"/><rect x="0" y="5" width="13" height="2.2" fill="#3592c4"/><rect x="0" y="10" width="13" height="2" fill="#afb1b3"/></svg>
<div class="a" style="left:239px;top:612px;width:1px;height:20px;background:#515151;"></div>
<svg class="a" style="left:249px;top:616px" width="14" height="13" viewBox="0 0 14 13"><path d="M0.5 6 L5 1.5 L9.5 6 L12 6" fill="none" stroke="#3592c4" stroke-width="1.6"/><path d="M9 3.5 L13 8 L8.5 8.5 Z" fill="#3592c4"/><rect x="1" y="11" width="12" height="2" fill="#afb1b3"/></svg>
<svg class="a" style="left:275px;top:616px" width="14" height="13" viewBox="0 0 14 13"><path d="M7 0 V6" stroke="#3592c4" stroke-width="1.8"/><path d="M3 5 H11 L7 9 Z" fill="#3592c4"/><rect x="1" y="11" width="12" height="2" fill="#afb1b3"/></svg>
<svg class="a" style="left:301px;top:616px" width="14" height="13" viewBox="0 0 14 13"><path d="M7 0 V6" stroke="#c75450" stroke-width="1.8"/><path d="M3 5 H11 L7 9 Z" fill="#c75450"/><rect x="1" y="11" width="12" height="2" fill="#afb1b3"/></svg>
<svg class="a" style="left:327px;top:616px" width="14" height="13" viewBox="0 0 14 13"><path d="M7 4 V10" stroke="#3592c4" stroke-width="1.8"/><path d="M3 5 H11 L7 1 Z" fill="#3592c4"/><rect x="1" y="11" width="12" height="2" fill="#afb1b3"/></svg>
<svg class="a" style="left:353px;top:616px" width="14" height="13" viewBox="0 0 14 13"><path d="M1 1 L6 6 M6 1 L1 6" stroke="#c75450" stroke-width="1.7"/><path d="M5 12 H12.5 V5 H8" fill="none" stroke="#afb1b3" stroke-width="1.5"/><path d="M4 9 L4 12.5" stroke="#afb1b3" stroke-width="1.5"/></svg>
<svg class="a" style="left:379px;top:616px" width="15" height="14" viewBox="0 0 15 14"><path d="M1 1 L7 7" stroke="#3592c4" stroke-width="1.8"/><path d="M8.5 3 V8.5 H3 Z" fill="#3592c4"/><path d="M10 6 H14 M12 6 V13 M10 13 H14" stroke="#afb1b3" stroke-width="1"/></svg>
<div class="a" style="left:402px;top:612px;width:1px;height:20px;background:#515151;"></div>
<svg class="a" style="left:412px;top:616px" width="13" height="13" viewBox="0 0 13 13"><rect x="0.5" y="0.5" width="12" height="12" fill="none" stroke="#afb1b3" stroke-width="1.2"/><rect x="0.5" y="0.5" width="12" height="3" fill="#afb1b3"/><path d="M3 6 H4.5 M6 6 H7.5 M9 6 H10.5 M3 8.5 H4.5 M6 8.5 H7.5 M9 8.5 H10.5 M3 11 H4.5 M6 11 H7.5 M9 11 H10.5" stroke="#afb1b3" stroke-width="1.2"/></svg>
<svg class="a" style="left:438px;top:616px" width="14" height="13" viewBox="0 0 14 13"><path d="M0 1 H4 M0 4 H3 L6 8 H4 M0 8 H2 M0 11 H4 M6 4 L9 1 H14 M8 4 H14 M9 8 H14 M9 11 H14" fill="none" stroke="#5b5d5f" stroke-width="1.4"/></svg>
<svg class="a" style="left:920px;top:617px" width="18" height="16" viewBox="0 0 18 16"><rect x="0" y="0" width="7" height="5" fill="#afb1b3"/><rect x="8.3" y="0" width="4" height="5" fill="#afb1b3"/><rect x="0" y="6.2" width="12.3" height="4" fill="#afb1b3"/><path d="M11.5 12 H17.5 L14.5 15 Z" fill="#dddddd"/></svg>
<div class="a" style="left:51px;top:636px;width:887px;height:1px;background:#323232;"></div>
<div class="a" style="left:64px;top:641px;line-height:18px;font-size:11.2px;color:#bbbbbb;">Frames</div>
<div class="a" style="left:420px;top:637px;width:1px;height:235px;background:#323232;"></div>
<div class="a" style="left:434px;top:641px;line-height:18px;font-size:11.5px;color:#bbbbbb;">Variables</div>
<div class="a" style="left:51px;top:663px;width:887px;height:1px;background:#323232;"></div>
<div class="a" style="left:54px;top:667px;width:281px;height:24px;border:1px solid #5e6060;border-radius:3px"></div>
<svg class="a" style="left:61px;top:672px" width="14" height="12" viewBox="0 0 14 12"><path d="M1 6 L5 10 L13 1.5" fill="none" stroke="#d9673a" stroke-width="2.2"/></svg>
<div class="a" style="left:80px;top:671px;line-height:18px;font-size:13.1px;color:#bbbbbb;">"main"@1 in group "main": RUNNING</div>
<svg class="a" style="left:316px;top:676px" width="11" height="7" viewBox="0 0 11 7"><path d="M0.5 0.5 H10.5 L5.5 6 Z" fill="#afb1b3"/></svg>
<svg class="a" style="left:347px;top:671px" width="12" height="15" viewBox="0 0 12 15"><path d="M6 14 V2 M1.5 6.5 L6 2 L10.5 6.5" fill="none" stroke="#afb1b3" stroke-width="1.7"/></svg>
<svg class="a" style="left:373px;top:671px" width="12" height="15" viewBox="0 0 12 15"><path d="M6 1 V13 M1.5 8.5 L6 13 L10.5 8.5" fill="none" stroke="#afb1b3" stroke-width="1.7"/></svg>
<svg class="a" style="left:398px;top:672px" width="14" height="14" viewBox="0 0 14 14"><path d="M0.5 0.5 H13.5 L8.5 6 V13.5 H5.5 V6 Z" fill="#afb1b3"/></svg>
<div class="a" style="left:51px;top:695px;width:369px;height:177px;background:#4e4a3f;"></div>
<div class="a" style="left:51px;top:717px;width:369px;height:21px;background:#4b6eaf;"></div>
<div class="a" style="left:67px;top:697px;width:344px;height:175px;overflow:hidden;font-size:12.6px"><div style="height:21.1px;line-height:21px;color:#9e9c97">getInstance:525, Cipher <i>(javax.crypto)</i></div><div style="height:21.1px;line-height:21px;color:#dddddd">decrypt:55, XJdkDecryptor <i>(io.xjar)</i></div><div style="height:21.1px;line-height:21px;color:#9e9c97">getInputStream:160, XBootURLConnection <i>(io.xjar.boot)</i></div><div style="height:21.1px;line-height:21px;color:#9e9c97">openStream:1140, URL <i>(java.net)</i></div><div style="height:21.1px;line-height:21px;color:#9e9c97">findClass:65, XBootClassLoader <i>(io.xjar.boot)</i></div><div style="height:21.1px;line-height:21px;color:#9e9c97">loadClass:588, ClassLoader <i>(java.lang)</i></div><div style="height:21.1px;line-height:21px;color:#9e9c97">loadClass:151, LaunchedURLClassLoader <i>(org.springframework.boot.loader)</i></div><div style="height:21.1px;line-height:21px;color:#9e9c97">loadClass:521, ClassLoader <i>(java.lang)</i></div><div style="height:21.1px;line-height:21px;color:#9e9c97">forName0:-1, Class <i>(java.lang)</i></div></div>
<div class="a" style="left:411px;top:696px;width:8px;height:176px;background:rgba(150,150,140,0.3);"></div>
<div class="a" style="left:445px;top:664px;width:1px;height:208px;background:#323232;"></div>
<svg class="a" style="left:428px;top:672px" width="11" height="11" viewBox="0 0 11 11"><path d="M5.5 0 V11 M0 5.5 H11" stroke="#dcdcdc" stroke-width="1.8"/></svg>
<div class="a" style="left:428px;top:702px;width:11px;height:2px;background:#5b5d5f;"></div>
<svg class="a" style="left:427px;top:724px" width="13" height="7" viewBox="0 0 13 7"><path d="M0 7 L6.5 0 L13 7 Z" fill="#5b5d5f"/></svg>
<svg class="a" style="left:427px;top:750px" width="13" height="7" viewBox="0 0 13 7"><path d="M0 0 L6.5 7 L13 0 Z" fill="#5b5d5f"/></svg>
<svg class="a" style="left:426px;top:773px" width="14" height="14" viewBox="0 0 14 14"><rect x="0.5" y="0.5" width="9" height="10" fill="none" stroke="#afb1b3" stroke-width="1.2"/><rect x="3.5" y="3.5" width="10" height="10" fill="#3c3f41"/><rect x="4" y="4" width="9.5" height="9.5" fill="#afb1b3"/><path d="M6 7 H11.5 M6 9.5 H11.5" stroke="#3c3f41"/></svg>
<div class="a" style="left:423px;top:797px;width:21px;height:21px;background:#4f5254;border-radius:2px"></div>
<svg class="a" style="left:426px;top:803px" width="16" height="9" viewBox="0 0 16 9"><circle cx="4" cy="5" r="3.2" fill="none" stroke="#afb1b3" stroke-width="1.6"/><circle cx="12" cy="5" r="3.2" fill="none" stroke="#afb1b3" stroke-width="1.6"/><path d="M7 4 H9" stroke="#afb1b3" stroke-width="1.5"/></svg>
<div class="a" style="left:446px;top:724px;width:492px;height:20px;background:#0d293e;"></div>
<svg class="a" style="left:452px;top:671px" width="11" height="7" viewBox="0 0 11 7"><path d="M1 1.5 L5.5 5.5 L10 1.5" fill="none" stroke="#afb1b3" stroke-width="1.2"/></svg>
<svg class="a" style="left:473px;top:668px" width="11" height="11" viewBox="0 0 11 11"><rect x="0" y="0" width="11" height="2.4" fill="#c49a36"/><rect x="0" y="4.3" width="11" height="2.4" fill="#c49a36"/><rect x="0" y="8.6" width="11" height="2.4" fill="#c49a36"/></svg>
<div class="a" style="left:489px;top:665px;line-height:18px;font-size:12.8px;color:#bbbbbb;word-spacing:1.5px"><span style="color:#e8897f">this</span> = <span style="color:#8f8f8f">{XJdkDecryptor@2278}</span></div>
<svg class="a" style="left:473px;top:689px" width="7" height="11" viewBox="0 0 7 11"><path d="M1.5 1 L5.5 5.5 L1.5 10" fill="none" stroke="#afb1b3" stroke-width="1.2"/></svg>
<svg class="a" style="left:488px;top:686px" width="16" height="16" viewBox="0 0 16 16"><circle cx="7.5" cy="8.5" r="7" fill="#b88a3a"/><text x="5.2" y="12.5" font-family="Liberation Sans" font-size="10.5" fill="#3d2c0c">f</text></svg>
<svg class="a" style="left:487px;top:684px" width="6" height="6" viewBox="0 0 6 6"><circle cx="3" cy="3" r="2.5" fill="#9aa4ad"/></svg>
<div class="a" style="left:507px;top:685px;line-height:18px;font-size:13px;color:#bbbbbb;word-spacing:1.5px"><span style="color:#e8897f">algorithm</span> = <span style="color:#6a8759">"AES"</span></div>
<svg class="a" style="left:454px;top:709px" width="7" height="11" viewBox="0 0 7 11"><path d="M1.5 1 L5.5 5.5 L1.5 10" fill="none" stroke="#afb1b3" stroke-width="1.2"/></svg>
<svg class="a" style="left:471px;top:706px" width="16" height="16" viewBox="0 0 16 16"><circle cx="7.5" cy="8.5" r="7" fill="#b88a3a"/><text x="4.3" y="12.5" font-family="Liberation Sans" font-size="10.5" fill="#3d2c0c">p</text></svg>
<div class="a" style="left:489px;top:705px;line-height:18px;font-size:12.4px;color:#bbbbbb;word-spacing:1.5px"><span style="color:#e8897f">key</span> = <span style="color:#8f8f8f">{XSymmetricSecureKey@2279}</span></div>
<svg class="a" style="left:454px;top:729px" width="7" height="11" viewBox="0 0 7 11"><path d="M1.5 1 L5.5 5.5 L1.5 10" fill="none" stroke="#afb1b3" stroke-width="1.2"/></svg>
<svg class="a" style="left:471px;top:726px" width="16" height="16" viewBox="0 0 16 16"><circle cx="7.5" cy="8.5" r="7" fill="#b88a3a"/><text x="4.3" y="12.5" font-family="Liberation Sans" font-size="10.5" fill="#3d2c0c">p</text></svg>
<div class="a" style="left:489px;top:725px;line-height:18px;font-size:12.4px;color:#bbbbbb;word-spacing:1.5px"><span style="color:#e8897f">in</span> = <span style="color:#8f8f8f">{ZipInflaterInputStream@2280}</span></div>
<svg class="a" style="left:454px;top:749px" width="7" height="11" viewBox="0 0 7 11"><path d="M1.5 1 L5.5 5.5 L1.5 10" fill="none" stroke="#afb1b3" stroke-width="1.2"/></svg>
<svg class="a" style="left:470px;top:749px" width="17" height="10" viewBox="0 0 17 10"><circle cx="4" cy="5" r="3.3" fill="none" stroke="#afb1b3" stroke-width="1.6"/><circle cx="13" cy="5" r="3.3" fill="none" stroke="#afb1b3" stroke-width="1.6"/><path d="M7 4 H10" stroke="#afb1b3" stroke-width="1.5"/></svg>
<div class="a" style="left:489px;top:745px;line-height:18px;font-size:13.2px;color:#bbbbbb;word-spacing:1.5px"><span style="color:#e8897f">this.algorithm</span> = <span style="color:#6a8759">"AES"</span></div>
</div>
</body></html>
